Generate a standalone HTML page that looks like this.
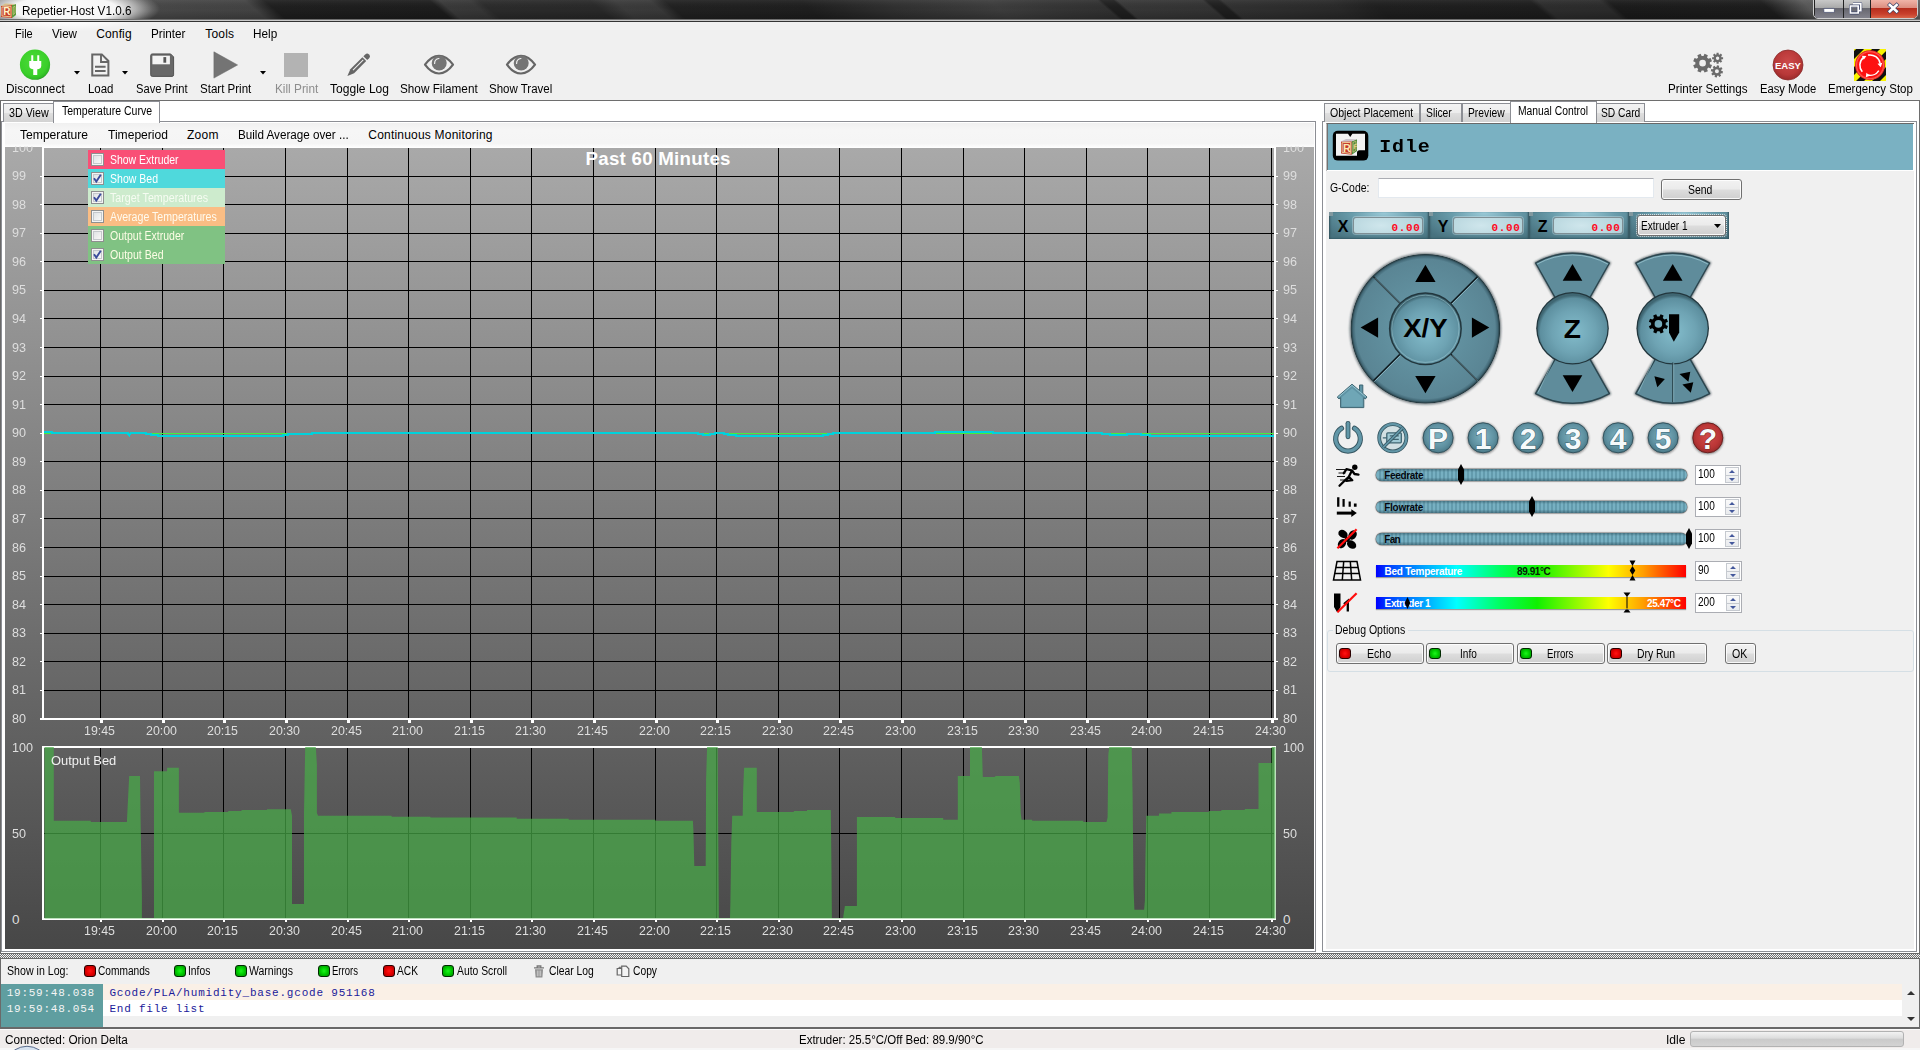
<!DOCTYPE html>
<html><head><meta charset="utf-8"><title>Repetier-Host V1.0.6</title>
<style>
html,body{margin:0;padding:0;}
body{width:1920px;height:1050px;overflow:hidden;background:#f0f0f0;position:relative;font-family:"Liberation Sans",sans-serif;}
div,.t,.a{position:absolute;}
.t{white-space:pre;display:block;}
svg{overflow:visible;}
</style></head><body>
<div style="left:0px;top:100px;width:1920px;height:1px;background:#6e6e6e;"></div>
<div style="left:0px;top:101px;width:1316px;height:852px;background:#fff;"></div>
<div style="left:0px;top:101px;width:1px;height:852px;background:#696969;"></div>
<div style="left:1px;top:121px;width:1315px;height:831px;border:1px solid #8c8e94;box-sizing:border-box;background:#fff;"></div>
<div style="left:3px;top:103px;width:51px;height:19px;border:1px solid #8c8e94;border-bottom:none;box-sizing:border-box;background:linear-gradient(to bottom,#f3f3f3 0,#ececec 48%,#dedede 52%,#d2d2d2 100%);"></div>
<div style="left:53px;top:101px;width:107px;height:22px;border:1px solid #8c8e94;border-bottom:none;box-sizing:border-box;background:#fff;"></div>
<span class="t" style="left:8.80px;top:106.75px;font-size:12.5px;line-height:12.5px;color:#000;transform:scaleX(0.8571);transform-origin:0 0;">3D View</span>
<span class="t" style="left:61.50px;top:104.75px;font-size:12.5px;line-height:12.5px;color:#000;transform:scaleX(0.8412);transform-origin:0 0;">Temperature Curve</span>
<div style="left:5px;top:123px;width:1309px;height:24px;background:linear-gradient(to bottom,#f0f0f0 0,#f6f6f6 30%,#f5f5f5 85%,#fdfdfd 100%);"></div>
<span class="t" style="left:20.00px;top:129.00px;font-size:12px;line-height:12px;color:#000;transform:scaleX(1.0094);transform-origin:0 0;">Temperature</span>
<span class="t" style="left:107.50px;top:129.00px;font-size:12px;line-height:12px;color:#000;transform:scaleX(1.0070);transform-origin:0 0;">Timeperiod</span>
<span class="t" style="left:186.90px;top:129.00px;font-size:12px;line-height:12px;color:#000;letter-spacing:0.281px;">Zoom</span>
<span class="t" style="left:238.30px;top:129.00px;font-size:12px;line-height:12px;color:#000;transform:scaleX(0.9723);transform-origin:0 0;">Build Average over ...</span>
<span class="t" style="left:368.30px;top:129.00px;font-size:12px;line-height:12px;color:#000;letter-spacing:0.206px;">Continuous Monitoring</span>
<div style="left:5px;top:147px;width:1309px;height:802px;background:linear-gradient(to bottom,#a9a9a9 0,#474747 100%);overflow:hidden;"><!--c--></div>
<svg class="a" style="left:0;top:147px" width="1316" height="802" viewBox="0 147 1316 802" shape-rendering="crispEdges">
<path d="M100.5 147V718 M162.5 147V718 M223.5 147V718 M285.5 147V718 M347.5 147V718 M408.5 147V718 M470.5 147V718 M531.5 147V718 M593.5 147V718 M655.5 147V718 M716.5 147V718 M778.5 147V718 M839.5 147V718 M901.5 147V718 M963.5 147V718 M1024.5 147V718 M1086.5 147V718 M1147.5 147V718 M1209.5 147V718 M1271.5 147V718 M44 176.5H1274 M44 204.5H1274 M44 233.5H1274 M44 261.5H1274 M44 290.5H1274 M44 318.5H1274 M44 347.5H1274 M44 376.5H1274 M44 404.5H1274 M44 433.5H1274 M44 461.5H1274 M44 490.5H1274 M44 518.5H1274 M44 547.5H1274 M44 576.5H1274 M44 604.5H1274 M44 633.5H1274 M44 661.5H1274 M44 690.5H1274" stroke="#000" stroke-width="1" fill="none"/>
<path d="M43 147V720 M1275 147V720" stroke="#fff" stroke-width="2" fill="none"/>
<path d="M40 719H1278" stroke="#fff" stroke-width="2" fill="none"/>
<path d="M42 147.500H1276" stroke="#fff" stroke-width="1" fill="none"/>
<path d="M40 176.5H42 M1276 176.5H1278 M40 204.5H42 M1276 204.5H1278 M40 233.5H42 M1276 233.5H1278 M40 261.5H42 M1276 261.5H1278 M40 290.5H42 M1276 290.5H1278 M40 318.5H42 M1276 318.5H1278 M40 347.5H42 M1276 347.5H1278 M40 376.5H42 M1276 376.5H1278 M40 404.5H42 M1276 404.5H1278 M40 433.5H42 M1276 433.5H1278 M40 461.5H42 M1276 461.5H1278 M40 490.5H42 M1276 490.5H1278 M40 518.5H42 M1276 518.5H1278 M40 547.5H42 M1276 547.5H1278 M40 576.5H42 M1276 576.5H1278 M40 604.5H42 M1276 604.5H1278 M40 633.5H42 M1276 633.5H1278 M40 661.5H42 M1276 661.5H1278 M40 690.5H42 M1276 690.5H1278 M100 720h2v2h-2z M162 720h2v2h-2z M223 720h2v2h-2z M285 720h2v2h-2z M347 720h2v2h-2z M408 720h2v2h-2z M470 720h2v2h-2z M531 720h2v2h-2z M593 720h2v2h-2z M655 720h2v2h-2z M716 720h2v2h-2z M778 720h2v2h-2z M839 720h2v2h-2z M901 720h2v2h-2z M963 720h2v2h-2z M1024 720h2v2h-2z M1086 720h2v2h-2z M1147 720h2v2h-2z M1209 720h2v2h-2z M1271 720h2v2h-2z" stroke="#fff" stroke-width="1" fill="#fff"/>
<path d="M100.5 748V918 M162.5 748V918 M223.5 748V918 M285.5 748V918 M347.5 748V918 M408.5 748V918 M470.5 748V918 M531.5 748V918 M593.5 748V918 M655.5 748V918 M716.5 748V918 M778.5 748V918 M839.5 748V918 M901.5 748V918 M963.5 748V918 M1024.5 748V918 M1086.5 748V918 M1147.5 748V918 M1209.5 748V918 M1271.5 748V918 M44 833.500H1274" stroke="#000" stroke-width="1" fill="none"/>
<path d="M43 746V920 M1275 746V920" stroke="#fff" stroke-width="2" fill="none"/>
<path d="M42 747H1276 M42 919H1276" stroke="#fff" stroke-width="2" fill="none"/>
</svg>
<svg class="a" style="left:0;top:740px" width="1316" height="190" viewBox="0 740 1316 190">
<path d="M44.5 747 L53.8 747 L53.8 820.7 L90.8 820.7 L90.8 822 L126.9 822 L128.2 795.5 L129.2 776.1 L140 776.1 L140.7 825.5 L141.9 896.8 L141.9 918 L154 918 L154 771.2 L167.1 771.2 L167.1 767.8 L178.9 767.8 L178.9 812.8 L204.4 812.8 L204.4 811.9 L228.2 811.9 L228.2 811 L241.5 811 L241.5 810.1 L267 810.1 L267 809.3 L290.8 809.3 L292 815.8 L292 903.9 L304 903.9 L304 813.1 L305.2 747 L315.8 747 L316.9 764.7 L316.9 813.1 L318.1 815.8 L391.6 815.8 L391.6 816.7 L430.4 816.7 L430.4 817.5 L516.7 817.5 L516.7 818.8 L568.7 818.8 L568.7 819.8 L655.5 819.8 L655.5 820.7 L692.9 820.7 L693.4 829.9 L694.3 866 L705.7 866 L706.1 778.8 L707.1 747 L717.7 747 L718.1 814.9 L718.9 918 L730 918 L730.4 901.2 L731.3 842.2 L732.2 815.8 L742.7 815.8 L743.1 792 L744.1 767.8 L756.8 767.8 L756.8 811.9 L793.8 811.9 L793.8 811 L807 811 L807 810.1 L830.8 810.1 L831.4 861.6 L831.9 918 L843.2 918 L843.2 917 L844.9 906 L856.9 906 L856.9 817 L895.2 817 L895.2 817.9 L943.2 817.9 L943.2 819.8 L957.8 819.8 L957.8 776.1 L970 776.1 L970 747 L981.9 747 L982.8 777 L995.2 777 L995.2 776.1 L1018.9 776.1 L1019.8 783.2 L1020.7 813.1 L1021.6 819.8 L1032.2 819.8 L1032.2 820.7 L1083.3 820.7 L1083.3 822 L1106.5 822 L1107.6 817.5 L1108.3 755 L1109.2 747 L1131.7 747 L1132.6 794.6 L1133.5 886.3 L1134.4 909.7 L1144.1 909.7 L1144.9 900.4 L1145.5 854.5 L1146.3 815.8 L1159 815.8 L1159 813.4 L1171.4 813.4 L1171.4 811.9 L1209 811.9 L1209 810.9 L1221.3 810.9 L1221.3 809.9 L1244.8 809.9 L1244.8 808.9 L1258.5 808.9 L1258.5 763.1 L1271.6 763.1 L1271.6 747 L1275.5 747 L1275.5 918.5 L44.5 918.5Z" fill="#48aa48" fill-opacity=".72"/>
</svg>
<svg class="a" style="left:0;top:147px" width="1316" height="802" viewBox="0 147 1316 802" shape-rendering="crispEdges">
<path d="M100 920h2v2h-2z M162 920h2v2h-2z M223 920h2v2h-2z M285 920h2v2h-2z M347 920h2v2h-2z M408 920h2v2h-2z M470 920h2v2h-2z M531 920h2v2h-2z M593 920h2v2h-2z M655 920h2v2h-2z M716 920h2v2h-2z M778 920h2v2h-2z M839 920h2v2h-2z M901 920h2v2h-2z M963 920h2v2h-2z M1024 920h2v2h-2z M1086 920h2v2h-2z M1147 920h2v2h-2z M1209 920h2v2h-2z M1271 920h2v2h-2z" fill="#fff"/>
<path d="M44 433.500H1274" stroke="#46ee3c" stroke-width="1" fill="none"/>
<path d="M44 432V432H52V433H127.7L129.1 435.500L130.5 433V433H145.7V434H151V435H158V436H282.5V435H288V434H311.5V433H698.2V434H703V435H710V434H715V433H723.5V434H728V435H735.5V436H823V435H828V434H833V433H935V432H993V433H1101.9V434H1110V435H1126.5V434H1141V435H1150V436H1274" stroke="#00d2dc" stroke-width="2" fill="none"/>
</svg>
<span class="t" style="left:12.00px;top:140.75px;font-size:13.5px;line-height:13.5px;color:#dedede;transform:scaleX(0.9323);transform-origin:0 0;clip-path:inset(5.400px 0 0 0);">100</span>
<span class="t" style="left:1283.00px;top:140.75px;font-size:13.5px;line-height:13.5px;color:#dedede;transform:scaleX(0.9323);transform-origin:0 0;clip-path:inset(5.400px 0 0 0);">100</span>
<span class="t" style="left:12.00px;top:168.75px;font-size:13.5px;line-height:13.5px;color:#dedede;transform:scaleX(0.9323);transform-origin:0 0;">99</span>
<span class="t" style="left:1283.00px;top:168.75px;font-size:13.5px;line-height:13.5px;color:#dedede;transform:scaleX(0.9323);transform-origin:0 0;">99</span>
<span class="t" style="left:12.00px;top:197.75px;font-size:13.5px;line-height:13.5px;color:#dedede;transform:scaleX(0.9323);transform-origin:0 0;">98</span>
<span class="t" style="left:1283.00px;top:197.75px;font-size:13.5px;line-height:13.5px;color:#dedede;transform:scaleX(0.9323);transform-origin:0 0;">98</span>
<span class="t" style="left:12.00px;top:225.75px;font-size:13.5px;line-height:13.5px;color:#dedede;transform:scaleX(0.9323);transform-origin:0 0;">97</span>
<span class="t" style="left:1283.00px;top:225.75px;font-size:13.5px;line-height:13.5px;color:#dedede;transform:scaleX(0.9323);transform-origin:0 0;">97</span>
<span class="t" style="left:12.00px;top:254.75px;font-size:13.5px;line-height:13.5px;color:#dedede;transform:scaleX(0.9323);transform-origin:0 0;">96</span>
<span class="t" style="left:1283.00px;top:254.75px;font-size:13.5px;line-height:13.5px;color:#dedede;transform:scaleX(0.9323);transform-origin:0 0;">96</span>
<span class="t" style="left:12.00px;top:282.75px;font-size:13.5px;line-height:13.5px;color:#dedede;transform:scaleX(0.9323);transform-origin:0 0;">95</span>
<span class="t" style="left:1283.00px;top:282.75px;font-size:13.5px;line-height:13.5px;color:#dedede;transform:scaleX(0.9323);transform-origin:0 0;">95</span>
<span class="t" style="left:12.00px;top:311.75px;font-size:13.5px;line-height:13.5px;color:#dedede;transform:scaleX(0.9323);transform-origin:0 0;">94</span>
<span class="t" style="left:1283.00px;top:311.75px;font-size:13.5px;line-height:13.5px;color:#dedede;transform:scaleX(0.9323);transform-origin:0 0;">94</span>
<span class="t" style="left:12.00px;top:340.75px;font-size:13.5px;line-height:13.5px;color:#dedede;transform:scaleX(0.9323);transform-origin:0 0;">93</span>
<span class="t" style="left:1283.00px;top:340.75px;font-size:13.5px;line-height:13.5px;color:#dedede;transform:scaleX(0.9323);transform-origin:0 0;">93</span>
<span class="t" style="left:12.00px;top:368.75px;font-size:13.5px;line-height:13.5px;color:#dedede;transform:scaleX(0.9323);transform-origin:0 0;">92</span>
<span class="t" style="left:1283.00px;top:368.75px;font-size:13.5px;line-height:13.5px;color:#dedede;transform:scaleX(0.9323);transform-origin:0 0;">92</span>
<span class="t" style="left:12.00px;top:397.75px;font-size:13.5px;line-height:13.5px;color:#dedede;transform:scaleX(0.9323);transform-origin:0 0;">91</span>
<span class="t" style="left:1283.00px;top:397.75px;font-size:13.5px;line-height:13.5px;color:#dedede;transform:scaleX(0.9323);transform-origin:0 0;">91</span>
<span class="t" style="left:12.00px;top:425.75px;font-size:13.5px;line-height:13.5px;color:#dedede;transform:scaleX(0.9323);transform-origin:0 0;">90</span>
<span class="t" style="left:1283.00px;top:425.75px;font-size:13.5px;line-height:13.5px;color:#dedede;transform:scaleX(0.9323);transform-origin:0 0;">90</span>
<span class="t" style="left:12.00px;top:454.75px;font-size:13.5px;line-height:13.5px;color:#dedede;transform:scaleX(0.9323);transform-origin:0 0;">89</span>
<span class="t" style="left:1283.00px;top:454.75px;font-size:13.5px;line-height:13.5px;color:#dedede;transform:scaleX(0.9323);transform-origin:0 0;">89</span>
<span class="t" style="left:12.00px;top:482.75px;font-size:13.5px;line-height:13.5px;color:#dedede;transform:scaleX(0.9323);transform-origin:0 0;">88</span>
<span class="t" style="left:1283.00px;top:482.75px;font-size:13.5px;line-height:13.5px;color:#dedede;transform:scaleX(0.9323);transform-origin:0 0;">88</span>
<span class="t" style="left:12.00px;top:511.75px;font-size:13.5px;line-height:13.5px;color:#dedede;transform:scaleX(0.9323);transform-origin:0 0;">87</span>
<span class="t" style="left:1283.00px;top:511.75px;font-size:13.5px;line-height:13.5px;color:#dedede;transform:scaleX(0.9323);transform-origin:0 0;">87</span>
<span class="t" style="left:12.00px;top:540.75px;font-size:13.5px;line-height:13.5px;color:#dedede;transform:scaleX(0.9323);transform-origin:0 0;">86</span>
<span class="t" style="left:1283.00px;top:540.75px;font-size:13.5px;line-height:13.5px;color:#dedede;transform:scaleX(0.9323);transform-origin:0 0;">86</span>
<span class="t" style="left:12.00px;top:568.75px;font-size:13.5px;line-height:13.5px;color:#dedede;transform:scaleX(0.9323);transform-origin:0 0;">85</span>
<span class="t" style="left:1283.00px;top:568.75px;font-size:13.5px;line-height:13.5px;color:#dedede;transform:scaleX(0.9323);transform-origin:0 0;">85</span>
<span class="t" style="left:12.00px;top:597.75px;font-size:13.5px;line-height:13.5px;color:#dedede;transform:scaleX(0.9323);transform-origin:0 0;">84</span>
<span class="t" style="left:1283.00px;top:597.75px;font-size:13.5px;line-height:13.5px;color:#dedede;transform:scaleX(0.9323);transform-origin:0 0;">84</span>
<span class="t" style="left:12.00px;top:625.75px;font-size:13.5px;line-height:13.5px;color:#dedede;transform:scaleX(0.9323);transform-origin:0 0;">83</span>
<span class="t" style="left:1283.00px;top:625.75px;font-size:13.5px;line-height:13.5px;color:#dedede;transform:scaleX(0.9323);transform-origin:0 0;">83</span>
<span class="t" style="left:12.00px;top:654.75px;font-size:13.5px;line-height:13.5px;color:#dedede;transform:scaleX(0.9323);transform-origin:0 0;">82</span>
<span class="t" style="left:1283.00px;top:654.75px;font-size:13.5px;line-height:13.5px;color:#dedede;transform:scaleX(0.9323);transform-origin:0 0;">82</span>
<span class="t" style="left:12.00px;top:682.75px;font-size:13.5px;line-height:13.5px;color:#dedede;transform:scaleX(0.9323);transform-origin:0 0;">81</span>
<span class="t" style="left:1283.00px;top:682.75px;font-size:13.5px;line-height:13.5px;color:#dedede;transform:scaleX(0.9323);transform-origin:0 0;">81</span>
<span class="t" style="left:12.00px;top:711.75px;font-size:13.5px;line-height:13.5px;color:#dedede;transform:scaleX(0.9323);transform-origin:0 0;">80</span>
<span class="t" style="left:1283.00px;top:711.75px;font-size:13.5px;line-height:13.5px;color:#dedede;transform:scaleX(0.9323);transform-origin:0 0;">80</span>
<span class="t" style="left:84.10px;top:723.75px;font-size:13.5px;line-height:13.5px;color:#dedede;transform:scaleX(0.9176);transform-origin:0 0;">19:45</span>
<span class="t" style="left:84.10px;top:923.75px;font-size:13.5px;line-height:13.5px;color:#dedede;transform:scaleX(0.9176);transform-origin:0 0;">19:45</span>
<span class="t" style="left:146.10px;top:723.75px;font-size:13.5px;line-height:13.5px;color:#dedede;transform:scaleX(0.9176);transform-origin:0 0;">20:00</span>
<span class="t" style="left:146.10px;top:923.75px;font-size:13.5px;line-height:13.5px;color:#dedede;transform:scaleX(0.9176);transform-origin:0 0;">20:00</span>
<span class="t" style="left:207.10px;top:723.75px;font-size:13.5px;line-height:13.5px;color:#dedede;transform:scaleX(0.9176);transform-origin:0 0;">20:15</span>
<span class="t" style="left:207.10px;top:923.75px;font-size:13.5px;line-height:13.5px;color:#dedede;transform:scaleX(0.9176);transform-origin:0 0;">20:15</span>
<span class="t" style="left:269.10px;top:723.75px;font-size:13.5px;line-height:13.5px;color:#dedede;transform:scaleX(0.9176);transform-origin:0 0;">20:30</span>
<span class="t" style="left:269.10px;top:923.75px;font-size:13.5px;line-height:13.5px;color:#dedede;transform:scaleX(0.9176);transform-origin:0 0;">20:30</span>
<span class="t" style="left:331.10px;top:723.75px;font-size:13.5px;line-height:13.5px;color:#dedede;transform:scaleX(0.9176);transform-origin:0 0;">20:45</span>
<span class="t" style="left:331.10px;top:923.75px;font-size:13.5px;line-height:13.5px;color:#dedede;transform:scaleX(0.9176);transform-origin:0 0;">20:45</span>
<span class="t" style="left:392.10px;top:723.75px;font-size:13.5px;line-height:13.5px;color:#dedede;transform:scaleX(0.9176);transform-origin:0 0;">21:00</span>
<span class="t" style="left:392.10px;top:923.75px;font-size:13.5px;line-height:13.5px;color:#dedede;transform:scaleX(0.9176);transform-origin:0 0;">21:00</span>
<span class="t" style="left:454.10px;top:723.75px;font-size:13.5px;line-height:13.5px;color:#dedede;transform:scaleX(0.9176);transform-origin:0 0;">21:15</span>
<span class="t" style="left:454.10px;top:923.75px;font-size:13.5px;line-height:13.5px;color:#dedede;transform:scaleX(0.9176);transform-origin:0 0;">21:15</span>
<span class="t" style="left:515.10px;top:723.75px;font-size:13.5px;line-height:13.5px;color:#dedede;transform:scaleX(0.9176);transform-origin:0 0;">21:30</span>
<span class="t" style="left:515.10px;top:923.75px;font-size:13.5px;line-height:13.5px;color:#dedede;transform:scaleX(0.9176);transform-origin:0 0;">21:30</span>
<span class="t" style="left:577.10px;top:723.75px;font-size:13.5px;line-height:13.5px;color:#dedede;transform:scaleX(0.9176);transform-origin:0 0;">21:45</span>
<span class="t" style="left:577.10px;top:923.75px;font-size:13.5px;line-height:13.5px;color:#dedede;transform:scaleX(0.9176);transform-origin:0 0;">21:45</span>
<span class="t" style="left:639.10px;top:723.75px;font-size:13.5px;line-height:13.5px;color:#dedede;transform:scaleX(0.9176);transform-origin:0 0;">22:00</span>
<span class="t" style="left:639.10px;top:923.75px;font-size:13.5px;line-height:13.5px;color:#dedede;transform:scaleX(0.9176);transform-origin:0 0;">22:00</span>
<span class="t" style="left:700.10px;top:723.75px;font-size:13.5px;line-height:13.5px;color:#dedede;transform:scaleX(0.9176);transform-origin:0 0;">22:15</span>
<span class="t" style="left:700.10px;top:923.75px;font-size:13.5px;line-height:13.5px;color:#dedede;transform:scaleX(0.9176);transform-origin:0 0;">22:15</span>
<span class="t" style="left:762.10px;top:723.75px;font-size:13.5px;line-height:13.5px;color:#dedede;transform:scaleX(0.9176);transform-origin:0 0;">22:30</span>
<span class="t" style="left:762.10px;top:923.75px;font-size:13.5px;line-height:13.5px;color:#dedede;transform:scaleX(0.9176);transform-origin:0 0;">22:30</span>
<span class="t" style="left:823.10px;top:723.75px;font-size:13.5px;line-height:13.5px;color:#dedede;transform:scaleX(0.9176);transform-origin:0 0;">22:45</span>
<span class="t" style="left:823.10px;top:923.75px;font-size:13.5px;line-height:13.5px;color:#dedede;transform:scaleX(0.9176);transform-origin:0 0;">22:45</span>
<span class="t" style="left:885.10px;top:723.75px;font-size:13.5px;line-height:13.5px;color:#dedede;transform:scaleX(0.9176);transform-origin:0 0;">23:00</span>
<span class="t" style="left:885.10px;top:923.75px;font-size:13.5px;line-height:13.5px;color:#dedede;transform:scaleX(0.9176);transform-origin:0 0;">23:00</span>
<span class="t" style="left:947.10px;top:723.75px;font-size:13.5px;line-height:13.5px;color:#dedede;transform:scaleX(0.9176);transform-origin:0 0;">23:15</span>
<span class="t" style="left:947.10px;top:923.75px;font-size:13.5px;line-height:13.5px;color:#dedede;transform:scaleX(0.9176);transform-origin:0 0;">23:15</span>
<span class="t" style="left:1008.10px;top:723.75px;font-size:13.5px;line-height:13.5px;color:#dedede;transform:scaleX(0.9176);transform-origin:0 0;">23:30</span>
<span class="t" style="left:1008.10px;top:923.75px;font-size:13.5px;line-height:13.5px;color:#dedede;transform:scaleX(0.9176);transform-origin:0 0;">23:30</span>
<span class="t" style="left:1070.10px;top:723.75px;font-size:13.5px;line-height:13.5px;color:#dedede;transform:scaleX(0.9176);transform-origin:0 0;">23:45</span>
<span class="t" style="left:1070.10px;top:923.75px;font-size:13.5px;line-height:13.5px;color:#dedede;transform:scaleX(0.9176);transform-origin:0 0;">23:45</span>
<span class="t" style="left:1131.10px;top:723.75px;font-size:13.5px;line-height:13.5px;color:#dedede;transform:scaleX(0.9176);transform-origin:0 0;">24:00</span>
<span class="t" style="left:1131.10px;top:923.75px;font-size:13.5px;line-height:13.5px;color:#dedede;transform:scaleX(0.9176);transform-origin:0 0;">24:00</span>
<span class="t" style="left:1193.10px;top:723.75px;font-size:13.5px;line-height:13.5px;color:#dedede;transform:scaleX(0.9176);transform-origin:0 0;">24:15</span>
<span class="t" style="left:1193.10px;top:923.75px;font-size:13.5px;line-height:13.5px;color:#dedede;transform:scaleX(0.9176);transform-origin:0 0;">24:15</span>
<span class="t" style="left:1255.10px;top:723.75px;font-size:13.5px;line-height:13.5px;color:#dedede;transform:scaleX(0.9176);transform-origin:0 0;">24:30</span>
<span class="t" style="left:1255.10px;top:923.75px;font-size:13.5px;line-height:13.5px;color:#dedede;transform:scaleX(0.9176);transform-origin:0 0;">24:30</span>
<span class="t" style="left:12.00px;top:740.75px;font-size:13.5px;line-height:13.5px;color:#dedede;transform:scaleX(0.9323);transform-origin:0 0;">100</span>
<span class="t" style="left:1283.00px;top:740.75px;font-size:13.5px;line-height:13.5px;color:#dedede;transform:scaleX(0.9323);transform-origin:0 0;">100</span>
<span class="t" style="left:12.00px;top:826.75px;font-size:13.5px;line-height:13.5px;color:#dedede;transform:scaleX(0.9323);transform-origin:0 0;">50</span>
<span class="t" style="left:1283.00px;top:826.75px;font-size:13.5px;line-height:13.5px;color:#dedede;transform:scaleX(0.9323);transform-origin:0 0;">50</span>
<span class="t" style="left:12.00px;top:912.75px;font-size:13.5px;line-height:13.5px;color:#dedede;">0</span>
<span class="t" style="left:1283.00px;top:912.75px;font-size:13.5px;line-height:13.5px;color:#dedede;">0</span>
<span class="t" style="left:50.70px;top:753.75px;font-size:13.5px;line-height:13.5px;color:#f0f0f0;transform:scaleX(0.9561);transform-origin:0 0;">Output Bed</span>
<span class="t" style="left:585.50px;top:150.15px;font-size:18.7px;line-height:18.7px;color:#fff;font-weight:bold;letter-spacing:0.264px;">Past 60 Minutes</span>
<div style="left:88px;top:150px;width:137px;height:19px;background:#f94f76;"></div>
<div style="left:91px;top:153px;width:13px;height:13px;box-sizing:border-box;border:1px solid #8e8f8f;background:linear-gradient(135deg,#d9dde0 0,#f4f4f4 70%,#fff 100%);box-shadow:inset 0 0 0 1px #f4f4f4,inset 0 0 0 2px #c4c8cc;"></div>
<span class="t" style="left:110.30px;top:153.75px;font-size:12.5px;line-height:12.5px;color:#fff;transform:scaleX(0.8367);transform-origin:0 0;">Show Extruder</span>
<div style="left:88px;top:169px;width:137px;height:19px;background:#4fd9dc;"></div>
<div style="left:91px;top:172px;width:13px;height:13px;box-sizing:border-box;border:1px solid #8e8f8f;background:linear-gradient(135deg,#d9dde0 0,#f4f4f4 70%,#fff 100%);box-shadow:inset 0 0 0 1px #f4f4f4,inset 0 0 0 2px #c4c8cc;"></div>
<svg class="a" style="left:91px;top:172px" width="13" height="13" viewBox="0 0 13 13"><path d="M3 6.200 L5.300 9.500 L9.800 2.800" fill="none" stroke="#3b4c9c" stroke-width="1.900"/></svg>
<span class="t" style="left:110.30px;top:172.75px;font-size:12.5px;line-height:12.5px;color:#fff;transform:scaleX(0.8423);transform-origin:0 0;">Show Bed</span>
<div style="left:88px;top:188px;width:137px;height:19px;background:#cdebcd;"></div>
<div style="left:91px;top:191px;width:13px;height:13px;box-sizing:border-box;border:1px solid #8e8f8f;background:linear-gradient(135deg,#d9dde0 0,#f4f4f4 70%,#fff 100%);box-shadow:inset 0 0 0 1px #f4f4f4,inset 0 0 0 2px #c4c8cc;"></div>
<svg class="a" style="left:91px;top:191px" width="13" height="13" viewBox="0 0 13 13"><path d="M3 6.200 L5.300 9.500 L9.800 2.800" fill="none" stroke="#3b4c9c" stroke-width="1.900"/></svg>
<span class="t" style="left:110.30px;top:191.75px;font-size:12.5px;line-height:12.5px;color:#f6fcf2;transform:scaleX(0.8565);transform-origin:0 0;">Target Temperatures</span>
<div style="left:88px;top:207px;width:137px;height:19px;background:#fabd84;"></div>
<div style="left:91px;top:210px;width:13px;height:13px;box-sizing:border-box;border:1px solid #8e8f8f;background:linear-gradient(135deg,#d9dde0 0,#f4f4f4 70%,#fff 100%);box-shadow:inset 0 0 0 1px #f4f4f4,inset 0 0 0 2px #c4c8cc;"></div>
<span class="t" style="left:110.30px;top:210.75px;font-size:12.5px;line-height:12.5px;color:#fffaee;transform:scaleX(0.8476);transform-origin:0 0;">Average Temperatures</span>
<div style="left:88px;top:226px;width:137px;height:19px;background:#80c283;"></div>
<div style="left:91px;top:229px;width:13px;height:13px;box-sizing:border-box;border:1px solid #8e8f8f;background:linear-gradient(135deg,#d9dde0 0,#f4f4f4 70%,#fff 100%);box-shadow:inset 0 0 0 1px #f4f4f4,inset 0 0 0 2px #c4c8cc;"></div>
<span class="t" style="left:109.50px;top:229.75px;font-size:12.5px;line-height:12.5px;color:#fdfde6;transform:scaleX(0.8420);transform-origin:0 0;">Output Extruder</span>
<div style="left:88px;top:245px;width:137px;height:19px;background:#80c283;"></div>
<div style="left:91px;top:248px;width:13px;height:13px;box-sizing:border-box;border:1px solid #8e8f8f;background:linear-gradient(135deg,#d9dde0 0,#f4f4f4 70%,#fff 100%);box-shadow:inset 0 0 0 1px #f4f4f4,inset 0 0 0 2px #c4c8cc;"></div>
<svg class="a" style="left:91px;top:248px" width="13" height="13" viewBox="0 0 13 13"><path d="M3 6.200 L5.300 9.500 L9.800 2.800" fill="none" stroke="#3b4c9c" stroke-width="1.900"/></svg>
<span class="t" style="left:109.50px;top:248.75px;font-size:12.5px;line-height:12.5px;color:#fdfde6;transform:scaleX(0.8476);transform-origin:0 0;">Output Bed</span>
<div style="left:1316px;top:101px;width:604px;height:852px;background:#fff;"></div>
<div style="left:1322px;top:121px;width:1595px;height:0px;"></div>
<div style="left:1322px;top:121px;width:595px;height:831px;border:1px solid #8c8e94;box-sizing:border-box;background:#fff;"></div>
<div style="left:1919px;top:101px;width:1px;height:852px;background:#6e6e6e;"></div>
<div style="left:1326px;top:123px;width:588px;height:826px;background:#f0f0f0;"></div>
<div style="left:1326px;top:123px;width:588px;height:48px;background:#fff;border-left:1px solid #bdbdbd;border-top:1px solid #696969;box-sizing:border-box;"></div>
<div style="left:1327px;top:124px;width:1px;height:46px;background:#727272;"></div>
<div style="left:1324px;top:103px;width:96px;height:19px;border:1px solid #8c8e94;border-bottom:none;box-sizing:border-box;background:linear-gradient(to bottom,#f3f3f3 0,#ececec 48%,#dedede 52%,#d2d2d2 100%);"></div>
<span class="t" style="left:1329.70px;top:106.75px;font-size:12.5px;line-height:12.5px;color:#000;transform:scaleX(0.8443);transform-origin:0 0;">Object Placement</span>
<div style="left:1420px;top:103px;width:42px;height:19px;border:1px solid #8c8e94;border-bottom:none;box-sizing:border-box;background:linear-gradient(to bottom,#f3f3f3 0,#ececec 48%,#dedede 52%,#d2d2d2 100%);"></div>
<span class="t" style="left:1426.20px;top:106.75px;font-size:12.5px;line-height:12.5px;color:#000;transform:scaleX(0.8254);transform-origin:0 0;">Slicer</span>
<div style="left:1462px;top:103px;width:49px;height:19px;border:1px solid #8c8e94;border-bottom:none;box-sizing:border-box;background:linear-gradient(to bottom,#f3f3f3 0,#ececec 48%,#dedede 52%,#d2d2d2 100%);"></div>
<span class="t" style="left:1468.40px;top:106.75px;font-size:12.5px;line-height:12.5px;color:#000;transform:scaleX(0.8232);transform-origin:0 0;">Preview</span>
<div style="left:1596px;top:103px;width:49px;height:19px;border:1px solid #8c8e94;border-bottom:none;box-sizing:border-box;background:linear-gradient(to bottom,#f3f3f3 0,#ececec 48%,#dedede 52%,#d2d2d2 100%);"></div>
<span class="t" style="left:1601.20px;top:106.75px;font-size:12.5px;line-height:12.5px;color:#000;transform:scaleX(0.8199);transform-origin:0 0;">SD Card</span>
<div style="left:1510px;top:101px;width:87px;height:22px;border:1px solid #8c8e94;border-bottom:none;box-sizing:border-box;background:#fff;"></div>
<span class="t" style="left:1518.30px;top:104.75px;font-size:12.5px;line-height:12.5px;color:#000;transform:scaleX(0.8258);transform-origin:0 0;">Manual Control</span>
<div style="left:1328px;top:124px;width:585px;height:46px;background:#7ab1c2;"></div>
<svg class="a" style="left:1332px;top:130px" width="38" height="32" viewBox="0 0 38 32"><rect x=".8" y=".8" width="35.500" height="29.800" rx="5" fill="#000"/><path d="M4 3.800 h12 l2.200 3.300 l2.200-3.300 h12.600 v16.500 h-5.500 q-2.500 0-2.500 2.500 v3 h-21z" fill="#f2f2f2"/><path d="M9 11.600 L19.800 11.200 L19.800 24.800 L9 23.500z" fill="#c4362a"/><path d="M19.800 11.200 L25 9.200 L25 21 L19.800 24.800z" fill="#4f8a3a"/><path d="M9 11.600 L14 8.900 L25 9.200 L19.800 11.200z" fill="#c9c2c8"/><path d="M10.100 12.700 L18.700 12.400 L18.700 23.400 L10.100 22.400z" fill="none" stroke="#f3dfa2" stroke-width=".9"/><text x="10.900" y="22" font-family="Liberation Sans" font-weight="bold" font-size="10.800" fill="#fbe9b4">R</text><path d="M21 12.400 L23.900 11.200 L23.900 20.200 L21 22.300z" fill="none" stroke="#d9c67f" stroke-width=".7"/><text x="21.200" y="19.500" font-family="Liberation Sans" font-weight="bold" font-size="6.500" fill="#e9d68f" transform="skewY(-22) translate(0 8.600)">F</text></svg>
<span class="t" style="left:1379.30px;top:136.50px;font-size:20px;line-height:20px;color:#000;font-family:'Liberation Mono',monospace;font-weight:bold;letter-spacing:0.798px;transform:scaleY(.88);transform-origin:0 78%;">Idle</span>
<span class="t" style="left:1330.30px;top:181.75px;font-size:12.5px;line-height:12.5px;color:#000;transform:scaleX(0.8340);transform-origin:0 0;">G-Code:</span>
<div style="left:1378px;top:178px;width:276px;height:20px;box-sizing:border-box;border:1px solid #e3e9ef;border-top-color:#abadb3;background:#fff;border-radius:1px;"></div>
<div style="left:1661px;top:179px;width:81px;height:21px;box-sizing:border-box;border:1px solid #707070;border-radius:3px;background:linear-gradient(to bottom,#f2f2f2 0,#ebebeb 48%,#dddddd 52%,#cfcfcf 100%);box-shadow:inset 0 0 0 1px rgba(255,255,255,.85);"></div>
<span class="t" style="left:1688.00px;top:183.75px;font-size:12.5px;line-height:12.5px;color:#000;transform:scaleX(0.8324);transform-origin:0 0;">Send</span>
<div style="left:1329px;top:212px;width:100px;height:27px;background:radial-gradient(ellipse 70% 120% at 55% 0%,#9ccbd8 0,#6a9dac 45%,#47727f 100%);box-shadow:inset 2px 0 2px -1px #33525c,inset -2px 0 2px -1px #33525c,inset 0 -2px 2px -1px #3a5f6b;"></div>
<div style="left:1353px;top:217px;width:70px;height:17px;box-sizing:border-box;border:1px solid #7f8f95;border-radius:3px;background:radial-gradient(ellipse 60% 100% at 40% 50%,#cfe6ec 0,#b3d3db 100%);box-shadow:0 0 0 1px rgba(220,235,240,.35);"></div>
<span class="t" style="left:1337.70px;top:218.50px;font-size:16px;line-height:16px;color:#000;font-weight:bold;">X</span>
<div style="left:1329px;top:212px;width:4px;height:4px;background:#81989f;"></div>
<span class="t" style="left:1391.50px;top:222.50px;font-size:11px;line-height:11px;color:#ff0a1e;font-family:'Liberation Mono',monospace;font-weight:bold;letter-spacing:0.649px;">0.00</span>
<div style="left:1429px;top:212px;width:100px;height:27px;background:radial-gradient(ellipse 70% 120% at 55% 0%,#9ccbd8 0,#6a9dac 45%,#47727f 100%);box-shadow:inset 2px 0 2px -1px #33525c,inset -2px 0 2px -1px #33525c,inset 0 -2px 2px -1px #3a5f6b;"></div>
<div style="left:1453px;top:217px;width:70px;height:17px;box-sizing:border-box;border:1px solid #7f8f95;border-radius:3px;background:radial-gradient(ellipse 60% 100% at 40% 50%,#cfe6ec 0,#b3d3db 100%);box-shadow:0 0 0 1px rgba(220,235,240,.35);"></div>
<span class="t" style="left:1437.70px;top:218.50px;font-size:16px;line-height:16px;color:#000;font-weight:bold;">Y</span>
<div style="left:1429px;top:212px;width:4px;height:4px;background:#81989f;"></div>
<span class="t" style="left:1491.50px;top:222.50px;font-size:11px;line-height:11px;color:#ff0a1e;font-family:'Liberation Mono',monospace;font-weight:bold;letter-spacing:0.649px;">0.00</span>
<div style="left:1529px;top:212px;width:100px;height:27px;background:radial-gradient(ellipse 70% 120% at 55% 0%,#9ccbd8 0,#6a9dac 45%,#47727f 100%);box-shadow:inset 2px 0 2px -1px #33525c,inset -2px 0 2px -1px #33525c,inset 0 -2px 2px -1px #3a5f6b;"></div>
<div style="left:1553px;top:217px;width:70px;height:17px;box-sizing:border-box;border:1px solid #7f8f95;border-radius:3px;background:radial-gradient(ellipse 60% 100% at 40% 50%,#cfe6ec 0,#b3d3db 100%);box-shadow:0 0 0 1px rgba(220,235,240,.35);"></div>
<span class="t" style="left:1537.70px;top:218.50px;font-size:16px;line-height:16px;color:#000;font-weight:bold;">Z</span>
<div style="left:1529px;top:212px;width:4px;height:4px;background:#81989f;"></div>
<span class="t" style="left:1591.50px;top:222.50px;font-size:11px;line-height:11px;color:#ff0a1e;font-family:'Liberation Mono',monospace;font-weight:bold;letter-spacing:0.649px;">0.00</span>
<div style="left:1629px;top:212px;width:100px;height:27px;background:radial-gradient(ellipse 70% 120% at 55% 0%,#9ccbd8 0,#6a9dac 45%,#47727f 100%);box-shadow:inset 2px 0 2px -1px #33525c,inset -2px 0 2px -1px #33525c,inset 0 -2px 2px -1px #3a5f6b;"></div>
<div style="left:1629px;top:212px;width:4px;height:4px;background:#81989f;"></div>
<div style="left:1637px;top:215px;width:89px;height:21px;box-sizing:border-box;border:1px solid #707070;border-radius:3px;background:linear-gradient(to bottom,#f2f2f2 0,#ebebeb 48%,#dddddd 52%,#cfcfcf 100%);box-shadow:inset 0 0 0 1px rgba(255,255,255,.85);outline:1px dotted #ddd;outline-offset:0px;"></div>
<span class="t" style="left:1641.30px;top:219.75px;font-size:12.5px;line-height:12.5px;color:#000;transform:scaleX(0.8063);transform-origin:0 0;">Extruder 1</span>
<svg class="a" style="left:1714px;top:224px" width="7" height="4" viewBox="0 0 7 4"><path d="M0 0h7L3.500 4z" fill="#000"/></svg>
<svg class="a" style="left:1326px;top:245px" width="420" height="170" viewBox="1326 245 420 170">
<defs>
<radialGradient id="gring" cx="50%" cy="50%" r="50%"><stop offset="0" stop-color="#6c9dac"/><stop offset=".6" stop-color="#5f8d9c"/><stop offset=".93" stop-color="#5a8594"/><stop offset=".965" stop-color="#426876"/><stop offset=".99" stop-color="#24393f"/><stop offset="1" stop-color="#24393f" stop-opacity="0"/></radialGradient>
<radialGradient id="gknob" cx="52%" cy="55%" r="52%"><stop offset="0" stop-color="#83bccb"/><stop offset=".6" stop-color="#6ea3b3"/><stop offset=".92" stop-color="#5d8f9f"/><stop offset="1" stop-color="#3f6672"/></radialGradient>
<filter id="sh" x="-10%" y="-10%" width="120%" height="120%"><feGaussianBlur stdDeviation="1.200"/></filter>
</defs>
<circle cx="1425.4" cy="328.8" r="75.800" fill="#1d2c32" filter="url(#sh)" opacity=".6"/>
<circle cx="1425.4" cy="328.8" r="75" fill="url(#gring)"/>
<path d="M1450.9 354.3L1477.4 380.8" stroke="#0d171b" stroke-width="1.500"/>
<path d="M1451.8 355.2L1478.3 381.7" stroke="#a9d2dc" stroke-width=".8" opacity=".7"/>
<path d="M1399.9 354.3L1373.4 380.8" stroke="#0d171b" stroke-width="1.500"/>
<path d="M1400.8 355.2L1374.3 381.7" stroke="#a9d2dc" stroke-width=".8" opacity=".7"/>
<path d="M1399.9 303.3L1373.4 276.8" stroke="#0d171b" stroke-width="1.500"/>
<path d="M1400.8 304.2L1374.3 277.7" stroke="#a9d2dc" stroke-width=".8" opacity=".7"/>
<path d="M1450.9 303.3L1477.4 276.8" stroke="#0d171b" stroke-width="1.500"/>
<path d="M1451.8 304.2L1478.3 277.7" stroke="#a9d2dc" stroke-width=".8" opacity=".7"/>
<circle cx="1425.4" cy="328.8" r="36.500" fill="#22363d"/>
<circle cx="1425.4" cy="328.8" r="35" fill="url(#gknob)"/>
<circle cx="1425.4" cy="328.8" r="33.600" fill="none" stroke="#a9d2dc" stroke-width=".8" opacity=".6"/>
<path d="M1425.4 264.800 l10.200 17.200 h-20.400z M1425.4 393.200 l10.200-17.100 h-20.400z M1360.600 327.600 l17.500-10.100 v20.200z M1489.300 327.600 l-17.400-10.100 v20.200z" fill="#000"/>
<text x="1425.4" y="336.600" text-anchor="middle" font-family="Liberation Sans" font-weight="bold" font-size="26" textLength="44.500" lengthAdjust="spacingAndGlyphs" fill="#000">X/Y</text>
<path d="M1337.300 397 L1352 384.200 L1359.500 390.600 V385 H1362.800 V393.400 L1367 397 L1365.300 399 L1363.800 397.700 V407.600 H1340.600 V397.700 L1339 399z" fill="#5f94a5" stroke="#3d6572" stroke-width="1"/><path d="M1341.600 397.200 L1352 388.200 L1362.600 397.200 V406.600 H1341.600z" fill="#6fa6b6"/><path d="M1338.300 397.200 L1352 385.400 L1366 397.200" fill="none" stroke="#9cc9d5" stroke-width=".9"/>
<path d="M1572.5 328.3 L1535.6 263.0 A75 75 0 0 1 1609.4 263.0Z" fill="#1d2c32" filter="url(#sh)" opacity=".7" stroke="#1d2c32" stroke-width="2.500"/>
<path d="M1572.5 328.3 L1535.6 393.6 A75 75 0 0 0 1609.4 393.6Z" fill="#1d2c32" filter="url(#sh)" opacity=".7" stroke="#1d2c32" stroke-width="2.500"/>
<path d="M1572.5 328.3 L1535.6 263.0 A75 75 0 0 1 1609.4 263.0Z" fill="#5f8c9b" stroke="#2c464f" stroke-width="1.400" stroke-linejoin="round"/>
<path d="M1572.5 328.3 L1535.6 393.6 A75 75 0 0 0 1609.4 393.6Z" fill="#5f8c9b" stroke="#2c464f" stroke-width="1.400" stroke-linejoin="round"/>
<path d="M1537.0 264.2 A73.3 73.3 0 0 1 1608.0 264.2" fill="none" stroke="#a9d2dc" stroke-width=".9" opacity=".7"/>
<path d="M1553.3 360.1 L1538.2 392.4" fill="none" stroke="#a9d2dc" stroke-width=".9" opacity=".6"/>
<circle cx="1572.5" cy="328.3" r="36.300" fill="#22363d"/>
<circle cx="1572.5" cy="328.3" r="35" fill="url(#gknob)"/>
<path d="M1572.5 264.100 l9.800 16.600 h-19.600z" fill="#000"/>
<path d="M1672.7 328.3 L1635.8 263.0 A75 75 0 0 1 1709.6 263.0Z" fill="#1d2c32" filter="url(#sh)" opacity=".7" stroke="#1d2c32" stroke-width="2.500"/>
<path d="M1672.7 328.3 L1635.8 393.6 A75 75 0 0 0 1709.6 393.6Z" fill="#1d2c32" filter="url(#sh)" opacity=".7" stroke="#1d2c32" stroke-width="2.500"/>
<path d="M1672.7 328.3 L1635.8 263.0 A75 75 0 0 1 1709.6 263.0Z" fill="#5f8c9b" stroke="#2c464f" stroke-width="1.400" stroke-linejoin="round"/>
<path d="M1672.7 328.3 L1635.8 393.6 A75 75 0 0 0 1709.6 393.6Z" fill="#5f8c9b" stroke="#2c464f" stroke-width="1.400" stroke-linejoin="round"/>
<path d="M1637.2 264.2 A73.3 73.3 0 0 1 1708.2 264.2" fill="none" stroke="#a9d2dc" stroke-width=".9" opacity=".7"/>
<path d="M1653.5 360.1 L1638.4 392.4" fill="none" stroke="#a9d2dc" stroke-width=".9" opacity=".6"/>
<circle cx="1672.7" cy="328.3" r="36.300" fill="#22363d"/>
<circle cx="1672.7" cy="328.3" r="35" fill="url(#gknob)"/>
<path d="M1672.7 264.100 l9.800 16.600 h-19.600z" fill="#000"/>
<path d="M1572.500 392 l9.800-16.700 h-19.600z" fill="#000"/>
<text x="1572.300" y="337.600" text-anchor="middle" font-family="Liberation Sans" font-weight="bold" font-size="26" textLength="17.200" lengthAdjust="spacingAndGlyphs" fill="#000">Z</text>
<path d="M1672.700 362.500 V402.500" stroke="#2c464f" stroke-width="1.200"/><path d="M1673.700 363 V402" stroke="#a9d2dc" stroke-width=".8" opacity=".6"/>
<path d="M1654.400 376.200 L1664.900 379.100 L1657.300 387.200z M1679.500 374 L1690.300 371.800 L1688.400 381.800z M1682.400 384.600 L1693.300 382.300 L1690.800 392.700z" fill="#000"/>
<path d="M1665.72 324.98 L1667.95 326.09 L1666.73 329.06 L1664.36 328.28 L1662.81 329.84 L1663.61 332.20 L1660.64 333.44 L1659.52 331.21 L1657.32 331.22 L1656.21 333.45 L1653.24 332.23 L1654.02 329.86 L1652.46 328.31 L1650.10 329.11 L1648.86 326.14 L1651.09 325.02 L1651.08 322.82 L1648.85 321.71 L1650.07 318.74 L1652.44 319.52 L1653.99 317.96 L1653.19 315.60 L1656.16 314.36 L1657.28 316.59 L1659.48 316.58 L1660.59 314.35 L1663.56 315.57 L1662.78 317.94 L1664.34 319.49 L1666.70 318.69 L1667.94 321.66 L1665.71 322.78Z M1662.20 323.90 A3.8 3.8 0 1 0 1654.60 323.90 A3.8 3.8 0 1 0 1662.20 323.90Z" fill="#000" fill-rule="evenodd"/>
<path d="M1669 314.300 H1679.200 V332.400 L1673.800 341.700 L1669 332.400z" fill="#000"/>
</svg>
<svg class="a" style="left:1326px;top:418px" width="420" height="40" viewBox="1326 418 420 40">
<defs><radialGradient id="gb" cx="50%" cy="45%" r="55%"><stop offset="0" stop-color="#7fb4c3"/><stop offset=".7" stop-color="#5f91a1"/><stop offset="1" stop-color="#4a7987"/></radialGradient>
<radialGradient id="gr" cx="50%" cy="45%" r="55%"><stop offset="0" stop-color="#d04a4a"/><stop offset=".7" stop-color="#bb3636"/><stop offset="1" stop-color="#9c2b2b"/></radialGradient>
<filter id="sh2" x="-20%" y="-20%" width="140%" height="140%"><feGaussianBlur stdDeviation=".9"/></filter></defs>
<path d="M1341.5 428.3 A12.300 12.300 0 1 0 1354.5 428.3" fill="none" stroke="#34545f" stroke-width="5.200" stroke-linecap="round"/><path d="M1348 423.3 V436.8" stroke="#34545f" stroke-width="4.800" stroke-linecap="round"/>
<path d="M1341.5 428.3 A12.300 12.300 0 1 0 1354.5 428.3" fill="none" stroke="#6297a8" stroke-width="3.400" stroke-linecap="round"/><path d="M1348 423.3 V436.8" stroke="#6297a8" stroke-width="3" stroke-linecap="round"/>
<circle cx="1392.8" cy="437.8" r="13.600" fill="#79aebd" fill-opacity=".25" stroke="#34545f" stroke-width="3.800"/><circle cx="1392.8" cy="437.8" r="13.600" fill="none" stroke="#6297a8" stroke-width="2.200"/>
<rect x="1386.8" y="432.8" width="14.500" height="10" rx="1" fill="#9fc9d4" stroke="#3f6572" stroke-width="1.300"/><path d="M1382.8 437.8h4 M1389.8 435.8h9 M1389.8 439.3h9" stroke="#3f6572" stroke-width="1.300"/>
<path d="M1383.2 447.40000000000003 L1402.3999999999999 428.2" stroke="#34545f" stroke-width="3.400"/><path d="M1383.2 447.40000000000003 L1402.3999999999999 428.2" stroke="#6297a8" stroke-width="1.800"/>
<circle cx="1438.1" cy="438.3" r="15.800" fill="#222" filter="url(#sh2)" opacity=".55"/>
<circle cx="1438.1" cy="437.8" r="15" fill="url(#gb)" stroke="#34545f" stroke-width="1"/>
<text x="1438.1" y="448.8" text-anchor="middle" font-family="Liberation Sans" font-weight="bold" font-size="30" fill="#f6fafb" stroke="#3c6370" stroke-width="1.100" paint-order="stroke" stroke-linejoin="round">P</text>
<circle cx="1483.1" cy="438.3" r="15.800" fill="#222" filter="url(#sh2)" opacity=".55"/>
<circle cx="1483.1" cy="437.8" r="15" fill="url(#gb)" stroke="#34545f" stroke-width="1"/>
<text x="1483.1" y="448.8" text-anchor="middle" font-family="Liberation Sans" font-weight="bold" font-size="30" fill="#f6fafb" stroke="#3c6370" stroke-width="1.100" paint-order="stroke" stroke-linejoin="round">1</text>
<circle cx="1528.1" cy="438.3" r="15.800" fill="#222" filter="url(#sh2)" opacity=".55"/>
<circle cx="1528.1" cy="437.8" r="15" fill="url(#gb)" stroke="#34545f" stroke-width="1"/>
<text x="1528.1" y="448.8" text-anchor="middle" font-family="Liberation Sans" font-weight="bold" font-size="30" fill="#f6fafb" stroke="#3c6370" stroke-width="1.100" paint-order="stroke" stroke-linejoin="round">2</text>
<circle cx="1573.1" cy="438.3" r="15.800" fill="#222" filter="url(#sh2)" opacity=".55"/>
<circle cx="1573.1" cy="437.8" r="15" fill="url(#gb)" stroke="#34545f" stroke-width="1"/>
<text x="1573.1" y="448.8" text-anchor="middle" font-family="Liberation Sans" font-weight="bold" font-size="30" fill="#f6fafb" stroke="#3c6370" stroke-width="1.100" paint-order="stroke" stroke-linejoin="round">3</text>
<circle cx="1618.1" cy="438.3" r="15.800" fill="#222" filter="url(#sh2)" opacity=".55"/>
<circle cx="1618.1" cy="437.8" r="15" fill="url(#gb)" stroke="#34545f" stroke-width="1"/>
<text x="1618.1" y="448.8" text-anchor="middle" font-family="Liberation Sans" font-weight="bold" font-size="30" fill="#f6fafb" stroke="#3c6370" stroke-width="1.100" paint-order="stroke" stroke-linejoin="round">4</text>
<circle cx="1663.1" cy="438.3" r="15.800" fill="#222" filter="url(#sh2)" opacity=".55"/>
<circle cx="1663.1" cy="437.8" r="15" fill="url(#gb)" stroke="#34545f" stroke-width="1"/>
<text x="1663.1" y="448.8" text-anchor="middle" font-family="Liberation Sans" font-weight="bold" font-size="30" fill="#f6fafb" stroke="#3c6370" stroke-width="1.100" paint-order="stroke" stroke-linejoin="round">5</text>
<circle cx="1707.8" cy="438.3" r="15.800" fill="#222" filter="url(#sh2)" opacity=".55"/>
<circle cx="1707.8" cy="437.8" r="15" fill="url(#gr)" stroke="#6b2020" stroke-width="1"/>
<text x="1707.8" y="448.8" text-anchor="middle" font-family="Liberation Sans" font-weight="bold" font-size="30" fill="#f6fafb" stroke="#7a2424" stroke-width="1.100" paint-order="stroke" stroke-linejoin="round">?</text>
</svg>
<div style="left:1375.5px;top:469px;width:311px;height:12px;border-radius:6px;background:linear-gradient(to bottom,rgba(30,60,72,.45) 0,rgba(30,60,72,0) 25%,rgba(30,60,72,0) 70%,rgba(30,60,72,.5) 100%),repeating-linear-gradient(to right,#77b0c2 0,#77b0c2 3px,#4f8697 3px,#4f8697 4px) 0.500px 0,#77b0c2;box-shadow:0 0 1px .6px rgba(60,60,60,.8);"></div>
<span class="t" style="left:1384.30px;top:470.50px;font-size:10px;line-height:10px;color:#04080f;font-weight:bold;letter-spacing:-0.361px;">Feedrate</span>
<svg class="a" style="left:1457px;top:464px" width="8" height="21" viewBox="0 0 8 21"><path d="M4 0 L7 5.500 V15.500 L4 21 L1 15.500 V5.500z" fill="#000"/></svg>
<div style="left:1695px;top:465px;width:46px;height:20px;box-sizing:border-box;border:1px solid #abadb3;background:#fff;"></div>
<div style="left:1725px;top:467px;width:14px;height:16px;box-sizing:border-box;border:1px solid #c5c9cf;background:linear-gradient(to bottom,#fafafa,#e9ebee);"></div>
<div style="left:1725px;top:474.5px;width:14px;height:1px;background:#c5c9cf;"></div>
<svg class="a" style="left:1729px;top:470px" width="6" height="11" viewBox="0 0 6 11"><path d="M0 3L3 0L6 3z M0 8L3 11L6 8z" fill="#44589c"/></svg>
<span class="t" style="left:1698.00px;top:467.75px;font-size:12.5px;line-height:12.5px;color:#000;transform:scaleX(0.8055);transform-origin:0 0;">100</span>
<div style="left:1375.5px;top:501px;width:311px;height:12px;border-radius:6px;background:linear-gradient(to bottom,rgba(30,60,72,.45) 0,rgba(30,60,72,0) 25%,rgba(30,60,72,0) 70%,rgba(30,60,72,.5) 100%),repeating-linear-gradient(to right,#77b0c2 0,#77b0c2 3px,#4f8697 3px,#4f8697 4px) 0.500px 0,#77b0c2;box-shadow:0 0 1px .6px rgba(60,60,60,.8);"></div>
<span class="t" style="left:1384.30px;top:502.50px;font-size:10px;line-height:10px;color:#04080f;font-weight:bold;letter-spacing:-0.290px;">Flowrate</span>
<svg class="a" style="left:1528.4px;top:496px" width="8" height="21" viewBox="0 0 8 21"><path d="M4 0 L7 5.500 V15.500 L4 21 L1 15.500 V5.500z" fill="#000"/></svg>
<div style="left:1695px;top:497px;width:46px;height:20px;box-sizing:border-box;border:1px solid #abadb3;background:#fff;"></div>
<div style="left:1725px;top:499px;width:14px;height:16px;box-sizing:border-box;border:1px solid #c5c9cf;background:linear-gradient(to bottom,#fafafa,#e9ebee);"></div>
<div style="left:1725px;top:506.5px;width:14px;height:1px;background:#c5c9cf;"></div>
<svg class="a" style="left:1729px;top:502px" width="6" height="11" viewBox="0 0 6 11"><path d="M0 3L3 0L6 3z M0 8L3 11L6 8z" fill="#44589c"/></svg>
<span class="t" style="left:1698.00px;top:499.75px;font-size:12.5px;line-height:12.5px;color:#000;transform:scaleX(0.8055);transform-origin:0 0;">100</span>
<div style="left:1375.5px;top:533px;width:311px;height:12px;border-radius:6px;background:linear-gradient(to bottom,rgba(30,60,72,.45) 0,rgba(30,60,72,0) 25%,rgba(30,60,72,0) 70%,rgba(30,60,72,.5) 100%),repeating-linear-gradient(to right,#77b0c2 0,#77b0c2 3px,#4f8697 3px,#4f8697 4px) 0.500px 0,#77b0c2;box-shadow:0 0 1px .6px rgba(60,60,60,.8);"></div>
<span class="t" style="left:1384.30px;top:534.50px;font-size:10px;line-height:10px;color:#04080f;font-weight:bold;letter-spacing:-0.726px;">Fan</span>
<svg class="a" style="left:1685.2px;top:528px" width="8" height="21" viewBox="0 0 8 21"><path d="M4 0 L7 5.500 V15.500 L4 21 L1 15.500 V5.500z" fill="#000"/></svg>
<div style="left:1695px;top:529px;width:46px;height:20px;box-sizing:border-box;border:1px solid #abadb3;background:#fff;"></div>
<div style="left:1725px;top:531px;width:14px;height:16px;box-sizing:border-box;border:1px solid #c5c9cf;background:linear-gradient(to bottom,#fafafa,#e9ebee);"></div>
<div style="left:1725px;top:538.5px;width:14px;height:1px;background:#c5c9cf;"></div>
<svg class="a" style="left:1729px;top:534px" width="6" height="11" viewBox="0 0 6 11"><path d="M0 3L3 0L6 3z M0 8L3 11L6 8z" fill="#44589c"/></svg>
<span class="t" style="left:1698.00px;top:531.75px;font-size:12.5px;line-height:12.5px;color:#000;transform:scaleX(0.8055);transform-origin:0 0;">100</span>
<svg class="a" style="left:1334px;top:463px" width="28" height="24" viewBox="0 0 28 24"><circle cx="20.800" cy="4.300" r="2.700" fill="#000"/><path d="M12.500 6.200 L18 7.500 L20.500 11 L24.500 11.600 M18 7.500 L14.800 13.800 L18.300 17.200 L12.500 17.800 M14.800 13.800 L10.300 18 L5.500 22.800 M12.500 6.200 L9.800 10.200" fill="none" stroke="#000" stroke-width="2.300" stroke-linejoin="round" stroke-linecap="round"/><path d="M2 6.500 h9 M4.500 10 h7 M3 13.500 h8 M6 17 h5" stroke="#000" stroke-width=".9"/></svg>
<svg class="a" style="left:1336px;top:497px" width="23" height="21" viewBox="0 0 23 21"><path d="M1.100 .3h2.300v9.400h-2.300z M6.500 2.100h2.200v7.600h-2.200z M12.600 4.400h2.200v5.300h-2.200z M17.900 6.400h2.700v3.300h-2.700z" fill="#000"/><path d="M.8 16.100 H17" stroke="#000" stroke-width="3"/><path d="M15.300 12.300 L20.800 16.100 L15.300 19.900z" fill="#000"/></svg>
<svg class="a" style="left:1335px;top:528px" width="25" height="23" viewBox="0 0 25 23"><g fill="#000"><ellipse cx="8" cy="6" rx="5" ry="3.800" transform="rotate(35 8 6)"/><ellipse cx="17.600" cy="7" rx="5" ry="3.800" transform="rotate(-55 17.600 7)"/><ellipse cx="16.600" cy="16.600" rx="5" ry="3.800" transform="rotate(35 16.600 16.600)"/><ellipse cx="7" cy="15.600" rx="5" ry="3.800" transform="rotate(-55 7 15.600)"/><circle cx="12.300" cy="11.300" r="2.600"/></g><path d="M2.400 20.300 L21.600 1.300" stroke="#ff0c0c" stroke-width="2.200"/></svg>
<svg class="a" style="left:1332px;top:560px" width="30" height="22" viewBox="0 0 30 22"><path d="M5 1.500 H25 L28.500 20 H1.500z M3.900 7.500 H26.100 M2.800 13.500 H27.300 M11.700 1.500 L10.300 20 M18.300 1.500 L19.700 20" fill="none" stroke="#000" stroke-width="1.500"/></svg>
<svg class="a" style="left:1332px;top:592px" width="28" height="24" viewBox="0 0 28 24"><path d="M2 1.500 H8.500 V15 L5.300 20.500 L2 15z" fill="#000"/><path d="M12 12.200 L15.800 9 V19.500" fill="none" stroke="#000" stroke-width="2.300"/><path d="M5.400 20.200 L24.600 1.300" stroke="#ff0c0c" stroke-width="2.200"/></svg>
<div style="left:1376px;top:565px;width:310px;height:12px;background:linear-gradient(to right,#0000ff 0,#0040ff 4%,#00ffff 26%,#00ff60 40%,#10f000 52%,#80f800 63%,#ffff00 75%,#ffa000 86%,#ff0000 100%);box-shadow:0 1px 1px rgba(0,0,0,.35);"></div>
<div style="left:1376px;top:597px;width:310px;height:12px;background:linear-gradient(to right,#0000ff 0,#0040ff 4%,#00ffff 26%,#00ff60 40%,#10f000 52%,#80f800 63%,#ffff00 75%,#ffa000 86%,#ff0000 100%);box-shadow:0 1px 1px rgba(0,0,0,.35);"></div>
<span class="t" style="left:1384.60px;top:566.50px;font-size:10px;line-height:10px;color:#fff;font-weight:bold;letter-spacing:-0.274px;">Bed Temperature</span>
<span class="t" style="left:1517.00px;top:566.50px;font-size:10px;line-height:10px;color:#062006;font-weight:bold;letter-spacing:-0.421px;">89.91°C</span>
<span class="t" style="left:1384.60px;top:598.50px;font-size:10px;line-height:10px;color:#fff;font-weight:bold;letter-spacing:-0.376px;">Extruder 1</span>
<span class="t" style="left:1647.00px;top:598.50px;font-size:10px;line-height:10px;color:#fff;font-weight:bold;letter-spacing:-0.392px;">25.47°C</span>
<svg class="a" style="left:1628px;top:560px" width="9" height="21" viewBox="0 0 9 21"><path d="M1.500 .5 H7.500 L4.500 6 L7.300 10.500 L4.500 15 L7.500 20.500 H1.500 L4.500 15 L1.700 10.500 L4.500 6z" fill="#000"/></svg>
<svg class="a" style="left:1622px;top:592px" width="10" height="21" viewBox="0 0 10 21"><path d="M1.500 .5 H8.500 L5 5z M1.500 20.500 H8.500 L5 16z M4.500 3 H5.500 V18 H4.500z" fill="#000"/></svg>
<svg class="a" style="left:1403.500px;top:597px" width="7" height="12" viewBox="0 0 7 12"><path d="M3.500 0 L6.300 6 L3.500 12 L.7 6z" fill="#000"/></svg>
<div style="left:1695px;top:561px;width:47px;height:20px;box-sizing:border-box;border:1px solid #abadb3;background:#fff;"></div>
<div style="left:1726px;top:563px;width:14px;height:16px;box-sizing:border-box;border:1px solid #c5c9cf;background:linear-gradient(to bottom,#fafafa,#e9ebee);"></div>
<div style="left:1726px;top:570.5px;width:14px;height:1px;background:#c5c9cf;"></div>
<svg class="a" style="left:1730px;top:566px" width="6" height="11" viewBox="0 0 6 11"><path d="M0 3L3 0L6 3z M0 8L3 11L6 8z" fill="#44589c"/></svg>
<span class="t" style="left:1698.00px;top:563.75px;font-size:12.5px;line-height:12.5px;color:#000;transform:scaleX(0.8055);transform-origin:0 0;">90</span>
<div style="left:1695px;top:593px;width:47px;height:20px;box-sizing:border-box;border:1px solid #abadb3;background:#fff;"></div>
<div style="left:1726px;top:595px;width:14px;height:16px;box-sizing:border-box;border:1px solid #c5c9cf;background:linear-gradient(to bottom,#fafafa,#e9ebee);"></div>
<div style="left:1726px;top:602.5px;width:14px;height:1px;background:#c5c9cf;"></div>
<svg class="a" style="left:1730px;top:598px" width="6" height="11" viewBox="0 0 6 11"><path d="M0 3L3 0L6 3z M0 8L3 11L6 8z" fill="#44589c"/></svg>
<span class="t" style="left:1698.00px;top:595.75px;font-size:12.5px;line-height:12.5px;color:#000;transform:scaleX(0.8055);transform-origin:0 0;">200</span>
<div style="left:1327px;top:630px;width:587px;height:42px;box-sizing:border-box;border:1px solid #d5dfe5;border-radius:3px;"></div>
<div style="left:1333px;top:625px;width:75px;height:12px;background:#f0f0f0;"></div>
<span class="t" style="left:1335.30px;top:623.75px;font-size:12.5px;line-height:12.5px;color:#000;transform:scaleX(0.8419);transform-origin:0 0;">Debug Options</span>
<div style="left:1336px;top:643px;width:88px;height:21px;box-sizing:border-box;border:1px solid #707070;border-radius:3px;background:linear-gradient(to bottom,#f2f2f2 0,#ebebeb 48%,#dddddd 52%,#cfcfcf 100%);box-shadow:inset 0 0 0 1px rgba(255,255,255,.85);"></div>
<div style="left:1339px;top:647.5px;width:12px;height:11.5px;box-sizing:border-box;border:1px solid #2a0000;border-radius:3px;background:radial-gradient(circle at 50% 50%,#ff1414 0,#e80000 45%,#a80000 100%);"></div>
<span class="t" style="left:1367.00px;top:647.75px;font-size:12.5px;line-height:12.5px;color:#000;transform:scaleX(0.8423);transform-origin:0 0;">Echo</span>
<div style="left:1426px;top:643px;width:88px;height:21px;box-sizing:border-box;border:1px solid #707070;border-radius:3px;background:linear-gradient(to bottom,#f2f2f2 0,#ebebeb 48%,#dddddd 52%,#cfcfcf 100%);box-shadow:inset 0 0 0 1px rgba(255,255,255,.85);"></div>
<div style="left:1429px;top:647.5px;width:12px;height:11.5px;box-sizing:border-box;border:1px solid #002a00;border-radius:3px;background:radial-gradient(circle at 50% 50%,#1cf41c 0,#00d000 45%,#008a00 100%);"></div>
<span class="t" style="left:1460.20px;top:647.75px;font-size:12.5px;line-height:12.5px;color:#000;transform:scaleX(0.8058);transform-origin:0 0;">Info</span>
<div style="left:1517px;top:643px;width:88px;height:21px;box-sizing:border-box;border:1px solid #707070;border-radius:3px;background:linear-gradient(to bottom,#f2f2f2 0,#ebebeb 48%,#dddddd 52%,#cfcfcf 100%);box-shadow:inset 0 0 0 1px rgba(255,255,255,.85);"></div>
<div style="left:1520px;top:647.5px;width:12px;height:11.5px;box-sizing:border-box;border:1px solid #002a00;border-radius:3px;background:radial-gradient(circle at 50% 50%,#1cf41c 0,#00d000 45%,#008a00 100%);"></div>
<span class="t" style="left:1547.00px;top:647.75px;font-size:12.5px;line-height:12.5px;color:#000;transform:scaleX(0.7729);transform-origin:0 0;">Errors</span>
<div style="left:1607px;top:643px;width:100px;height:21px;box-sizing:border-box;border:1px solid #707070;border-radius:3px;background:linear-gradient(to bottom,#f2f2f2 0,#ebebeb 48%,#dddddd 52%,#cfcfcf 100%);box-shadow:inset 0 0 0 1px rgba(255,255,255,.85);"></div>
<div style="left:1610px;top:647.5px;width:12px;height:11.5px;box-sizing:border-box;border:1px solid #2a0000;border-radius:3px;background:radial-gradient(circle at 50% 50%,#ff1414 0,#e80000 45%,#a80000 100%);"></div>
<span class="t" style="left:1637.40px;top:647.75px;font-size:12.5px;line-height:12.5px;color:#000;transform:scaleX(0.8311);transform-origin:0 0;">Dry Run</span>
<div style="left:1725px;top:643px;width:31px;height:21px;box-sizing:border-box;border:1px solid #707070;border-radius:3px;background:linear-gradient(to bottom,#f2f2f2 0,#ebebeb 48%,#dddddd 52%,#cfcfcf 100%);box-shadow:inset 0 0 0 1px rgba(255,255,255,.85);"></div>
<span class="t" style="left:1731.70px;top:647.75px;font-size:12.5px;line-height:12.5px;color:#000;transform:scaleX(0.8472);transform-origin:0 0;">OK</span>
<div style="left:0px;top:953px;width:1920px;height:6px;background:#f0f0f0;"></div>
<div style="left:0px;top:953px;width:1920px;height:1px;background:#6a6a6a;"></div>
<div style="left:0px;top:954px;width:1920px;height:4px;background:repeating-conic-gradient(#6e6e6e 0 25%,#f4f4f4 0 50%) 0 0/2px 2px;"></div>
<div style="left:0px;top:958px;width:1920px;height:1px;background:#6a6a6a;"></div>
<div style="left:0px;top:959px;width:1920px;height:68px;background:#f0f0f0;"></div>
<div style="left:0px;top:959px;width:1px;height:68px;background:#6a6a6a;"></div>
<div style="left:1919px;top:959px;width:1px;height:68px;background:#6a6a6a;"></div>
<span class="t" style="left:7.30px;top:964.75px;font-size:12.5px;line-height:12.5px;color:#000;transform:scaleX(0.8496);transform-origin:0 0;">Show in Log:</span>
<div style="left:84.2px;top:965px;width:12px;height:12px;box-sizing:border-box;border:1px solid #2a0000;border-radius:3px;background:radial-gradient(circle at 50% 50%,#ff1414 0,#e80000 45%,#a80000 100%);"></div>
<span class="t" style="left:97.50px;top:964.75px;font-size:12.5px;line-height:12.5px;color:#000;transform:scaleX(0.8121);transform-origin:0 0;">Commands</span>
<div style="left:174.2px;top:965px;width:12px;height:12px;box-sizing:border-box;border:1px solid #002a00;border-radius:3px;background:radial-gradient(circle at 50% 50%,#1cf41c 0,#00d000 45%,#008a00 100%);"></div>
<span class="t" style="left:188.10px;top:964.75px;font-size:12.5px;line-height:12.5px;color:#000;transform:scaleX(0.8229);transform-origin:0 0;">Infos</span>
<div style="left:235px;top:965px;width:12px;height:12px;box-sizing:border-box;border:1px solid #002a00;border-radius:3px;background:radial-gradient(circle at 50% 50%,#1cf41c 0,#00d000 45%,#008a00 100%);"></div>
<span class="t" style="left:249.40px;top:964.75px;font-size:12.5px;line-height:12.5px;color:#000;transform:scaleX(0.8389);transform-origin:0 0;">Warnings</span>
<div style="left:318.1px;top:965px;width:12px;height:12px;box-sizing:border-box;border:1px solid #002a00;border-radius:3px;background:radial-gradient(circle at 50% 50%,#1cf41c 0,#00d000 45%,#008a00 100%);"></div>
<span class="t" style="left:332.30px;top:964.75px;font-size:12.5px;line-height:12.5px;color:#000;transform:scaleX(0.7640);transform-origin:0 0;">Errors</span>
<div style="left:383.1px;top:965px;width:12px;height:12px;box-sizing:border-box;border:1px solid #2a0000;border-radius:3px;background:radial-gradient(circle at 50% 50%,#ff1414 0,#e80000 45%,#a80000 100%);"></div>
<span class="t" style="left:397.00px;top:964.75px;font-size:12.5px;line-height:12.5px;color:#000;transform:scaleX(0.8170);transform-origin:0 0;">ACK</span>
<div style="left:442px;top:965px;width:12px;height:12px;box-sizing:border-box;border:1px solid #002a00;border-radius:3px;background:radial-gradient(circle at 50% 50%,#1cf41c 0,#00d000 45%,#008a00 100%);"></div>
<span class="t" style="left:456.50px;top:964.75px;font-size:12.5px;line-height:12.5px;color:#000;transform:scaleX(0.8272);transform-origin:0 0;">Auto Scroll</span>
<span class="t" style="left:548.50px;top:964.75px;font-size:12.5px;line-height:12.5px;color:#000;transform:scaleX(0.8266);transform-origin:0 0;">Clear Log</span>
<span class="t" style="left:632.50px;top:964.75px;font-size:12.5px;line-height:12.5px;color:#000;transform:scaleX(0.8224);transform-origin:0 0;">Copy</span>
<svg class="a" style="left:533px;top:965px" width="12" height="13" viewBox="0 0 12 13"><path d="M1 2.800h10 M4.200 2.500 V1 h3.600 V2.500" fill="none" stroke="#777" stroke-width="1.300"/><path d="M2 4.200h8l-.6 8.300h-6.800z" fill="#8c8c8c"/><path d="M4.300 5.500v5.800 M6 5.500v5.800 M7.700 5.500v5.800" stroke="#e8e8e8" stroke-width=".7"/></svg>
<svg class="a" style="left:616px;top:965px" width="14" height="13" viewBox="0 0 14 13"><path d="M1.200 3.500 h5.300 v6.500 h-5.300z" fill="#f4f4f4" stroke="#666" stroke-width="1.200"/><path d="M5.700 1.200 h4.500 l2.600 2.600 v7.700 h-7.100z" fill="#f4f4f4" stroke="#666" stroke-width="1.200"/><path d="M3 3.300 v-1 h2" fill="none" stroke="#666" stroke-width="1"/></svg>
<div style="left:1px;top:984px;width:102px;height:43px;background:#5f9ea0;"></div>
<div style="left:103px;top:984px;width:1799px;height:16px;background:#faf0e6;"></div>
<div style="left:103px;top:1000px;width:1799px;height:16px;background:#fff;"></div>
<span class="t" style="left:6.70px;top:987.50px;font-size:11px;line-height:11px;color:#f5f5f5;font-family:'Liberation Mono',monospace;letter-spacing:0.749px;">19:59:48.038</span>
<span class="t" style="left:6.70px;top:1003.50px;font-size:11px;line-height:11px;color:#f5f5f5;font-family:'Liberation Mono',monospace;letter-spacing:0.749px;">19:59:48.054</span>
<span class="t" style="left:109.40px;top:987.50px;font-size:11px;line-height:11px;color:#1a1a9a;font-family:'Liberation Mono',monospace;letter-spacing:0.794px;">Gcode/PLA/humidity_base.gcode 951168</span>
<span class="t" style="left:109.40px;top:1003.50px;font-size:11px;line-height:11px;color:#1a1a9a;font-family:'Liberation Mono',monospace;letter-spacing:0.776px;">End file list</span>
<svg class="a" style="left:1907px;top:991px" width="8" height="30" viewBox="0 0 8 30"><path d="M0 4L4 0L8 4z M0 26L4 30L8 26z" fill="#333"/></svg>
<div style="left:0px;top:1027px;width:1920px;height:2px;background:#696969;"></div>
<div style="left:0px;top:1029px;width:1920px;height:1px;background:#fbfbfb;"></div>
<div style="left:0px;top:1030px;width:1920px;height:18px;background:#f0eceb;"></div>
<div style="left:0px;top:1048px;width:1920px;height:2px;background:#f6f6f6;"></div>
<span class="t" style="left:4.60px;top:1034.00px;font-size:12px;line-height:12px;color:#000;transform:scaleX(0.9800);transform-origin:0 0;">Connected: Orion Delta</span>
<span class="t" style="left:799.40px;top:1034.00px;font-size:12px;line-height:12px;color:#000;transform:scaleX(0.9574);transform-origin:0 0;">Extruder: 25.5°C/Off Bed: 89.9/90°C</span>
<span class="t" style="left:1665.50px;top:1034.00px;font-size:12px;line-height:12px;color:#000;transform:scaleX(1.0078);transform-origin:0 0;">Idle</span>
<div style="left:1690px;top:1031px;width:214px;height:16px;box-sizing:border-box;border:1px solid #b2b2b2;border-radius:3px;background:linear-gradient(to bottom,#f2f2f2 0,#dcdcdc 45%,#cacaca 50%,#d3d3d3 100%);"></div>
<svg class="a" style="left:14px;top:1045px" width="26" height="5" viewBox="0 0 26 5"><path d="M.5 5 Q13 -2.500 25.500 5" fill="#d6e2f0" stroke="#5a6c8c" stroke-width="1"/></svg>
<svg class="a" style="left:0;top:0" width="1920" height="20" viewBox="0 0 1920 20"><defs><linearGradient id="tb" gradientUnits="userSpaceOnUse" x1="-20" y1="0" x2="1960" y2="0" gradientTransform="translate(-11 0) skewX(49)"><stop offset="0.0101" stop-color="#505050"/><stop offset="0.0823" stop-color="#484848"/><stop offset="0.1111" stop-color="#444444"/><stop offset="0.1389" stop-color="#424242"/><stop offset="0.1490" stop-color="#1e1e1e"/><stop offset="0.2323" stop-color="#1c1c1c"/><stop offset="0.2374" stop-color="#383838"/><stop offset="0.2525" stop-color="#363636"/><stop offset="0.2576" stop-color="#2a2a2a"/><stop offset="0.3131" stop-color="#282828"/><stop offset="0.3258" stop-color="#3a3a3a"/><stop offset="0.3434" stop-color="#383838"/><stop offset="0.3510" stop-color="#202020"/><stop offset="0.4192" stop-color="#1e1e1e"/><stop offset="0.4646" stop-color="#303030"/><stop offset="0.5152" stop-color="#3c3c3c"/><stop offset="0.5455" stop-color="#343434"/><stop offset="0.5697" stop-color="#303030"/><stop offset="0.5717" stop-color="#1e1e1e"/><stop offset="0.5778" stop-color="#1e1e1e"/><stop offset="0.5798" stop-color="#363636"/><stop offset="0.6227" stop-color="#323232"/><stop offset="0.6247" stop-color="#1e1e1e"/><stop offset="0.6308" stop-color="#1e1e1e"/><stop offset="0.6328" stop-color="#303030"/><stop offset="0.6869" stop-color="#282828"/><stop offset="0.7071" stop-color="#1e1e1e"/><stop offset="0.7879" stop-color="#1c1c1c"/><stop offset="0.7919" stop-color="#2c2c2c"/><stop offset="0.8232" stop-color="#2a2a2a"/><stop offset="0.8273" stop-color="#1a1a1a"/><stop offset="0.9040" stop-color="#1c1c1c"/><stop offset="0.9253" stop-color="#585858"/><stop offset="0.9899" stop-color="#626262"/></linearGradient><linearGradient id="tbv" x1="0" y1="0" x2="0" y2="1"><stop offset="0" stop-color="#fff" stop-opacity=".07"/><stop offset=".5" stop-color="#000" stop-opacity="0"/><stop offset="1" stop-color="#000" stop-opacity=".22"/></linearGradient></defs><rect width="1920" height="20" fill="url(#tb)"/><rect width="1920" height="20" fill="url(#tbv)"/></svg>
<div style="left:-30px;top:-14px;width:190px;height:46px;background:radial-gradient(ellipse 50% 50% at 50% 50%,rgba(255,255,255,.98) 0,rgba(255,255,255,.95) 55%,rgba(255,255,255,.55) 75%,rgba(255,255,255,.15) 92%,rgba(255,255,255,0) 100%);"></div>
<div style="left:0px;top:19px;width:1920px;height:1px;background:#6e6e6e;"></div>
<div style="left:0px;top:20px;width:1920px;height:1px;background:#c9c9c9;"></div>
<div style="left:0px;top:21px;width:1920px;height:1px;background:#333;"></div>
<svg class="a" style="left:0;top:3px" width="18" height="16" viewBox="0 0 18 16"><path d="M1 3 L12 2 L12 15 L1 14Z" fill="#c8402a"/><path d="M12 2 L16 1 L16 12 L12 15Z" fill="#5c9a3c"/><path d="M1 3 L5 0.5 L16 1 L12 2Z" fill="#d9c08a"/><path d="M2 4 L11 3.3 L11 13.8 L2 13Z" fill="none" stroke="#f3dfa2" stroke-width=".8"/><text x="3.2" y="12.3" font-family="Liberation Sans" font-weight="bold" font-size="10" fill="#fff3c8">R</text><path d="M13.2 4 L15 3.4 L15 10 L13.2 11.6Z" fill="none" stroke="#e9d68f" stroke-width=".6"/></svg>
<span class="t" style="left:21.50px;top:5.00px;font-size:12px;line-height:12px;color:#000;transform:scaleX(0.9772);transform-origin:0 0;">Repetier-Host V1.0.6</span>
<div style="left:1813px;top:-2px;width:105px;height:21px;box-sizing:border-box;border:1px solid #cfcfcf;border-radius:0 0 5px 5px;background:#222;overflow:hidden;"><div style="left:1px;top:1px;width:28px;height:8px;background:linear-gradient(#c8c8c8,#a9a9a9)"></div><div style="left:1px;top:9px;width:28px;height:10px;background:linear-gradient(#66666e,#82828c)"></div><div style="left:30px;top:1px;width:26px;height:8px;background:linear-gradient(#c8c8c8,#a9a9a9)"></div><div style="left:30px;top:9px;width:26px;height:10px;background:linear-gradient(#66666e,#82828c)"></div><div style="left:57px;top:1px;width:46px;height:8px;background:linear-gradient(#f0b4a8,#dc8c7e)"></div><div style="left:57px;top:9px;width:46px;height:10px;background:linear-gradient(#b42c1c,#c8402c 60%,#d86448)"></div></div>
<svg class="a" style="left:1813px;top:0" width="105" height="19" viewBox="0 0 105 19"><rect x="10.800" y="8.400" width="10.600" height="4" rx=".8" fill="#fff" stroke="#3c4468" stroke-width=".7"/><path d="M40 3.600 h7.800 v7 h-2 M37.400 6 h7.800 v7 h-7.800z" fill="none" stroke="#3c4468" stroke-width="2.800" stroke-linejoin="round"/><path d="M40 3.600 h7.800 v7 h-2 M37.400 6 h7.800 v7 h-7.800z" fill="none" stroke="#fff" stroke-width="1.700"/><path d="M76.800 5 L83.600 11.300 M83.600 5 L76.800 11.300" stroke="#3c4468" stroke-width="3.900" stroke-linecap="square"/><path d="M76.800 5 L83.600 11.300 M83.600 5 L76.800 11.300" stroke="#fff" stroke-width="2.600" stroke-linecap="square"/></svg>
<span class="t" style="left:15.30px;top:28.00px;font-size:12px;line-height:12px;color:#000;transform:scaleX(0.9153);transform-origin:0 0;">File</span>
<span class="t" style="left:52.00px;top:28.00px;font-size:12px;line-height:12px;color:#000;transform:scaleX(0.9692);transform-origin:0 0;">View</span>
<span class="t" style="left:96.30px;top:28.00px;font-size:12px;line-height:12px;color:#000;letter-spacing:0.119px;">Config</span>
<span class="t" style="left:151.30px;top:28.00px;font-size:12px;line-height:12px;color:#000;transform:scaleX(0.9761);transform-origin:0 0;">Printer</span>
<span class="t" style="left:205.30px;top:28.00px;font-size:12px;line-height:12px;color:#000;letter-spacing:0.177px;">Tools</span>
<span class="t" style="left:253.30px;top:28.00px;font-size:12px;line-height:12px;color:#000;transform:scaleX(0.9805);transform-origin:0 0;">Help</span>
<span class="t" style="left:5.50px;top:83.00px;font-size:12px;line-height:12px;color:#000;transform:scaleX(0.9888);transform-origin:0 0;">Disconnect</span>
<span class="t" style="left:87.50px;top:83.00px;font-size:12px;line-height:12px;color:#000;transform:scaleX(0.9552);transform-origin:0 0;">Load</span>
<span class="t" style="left:136.40px;top:83.00px;font-size:12px;line-height:12px;color:#000;transform:scaleX(0.9321);transform-origin:0 0;">Save Print</span>
<span class="t" style="left:199.50px;top:83.00px;font-size:12px;line-height:12px;color:#000;transform:scaleX(0.9616);transform-origin:0 0;">Start Print</span>
<span class="t" style="left:274.70px;top:83.00px;font-size:12px;line-height:12px;color:#8d8d8d;transform:scaleX(0.9838);transform-origin:0 0;">Kill Print</span>
<span class="t" style="left:329.70px;top:83.00px;font-size:12px;line-height:12px;color:#000;transform:scaleX(1.0048);transform-origin:0 0;">Toggle Log</span>
<span class="t" style="left:400.30px;top:83.00px;font-size:12px;line-height:12px;color:#000;transform:scaleX(0.9790);transform-origin:0 0;">Show Filament</span>
<span class="t" style="left:489.20px;top:83.00px;font-size:12px;line-height:12px;color:#000;transform:scaleX(0.9586);transform-origin:0 0;">Show Travel</span>
<span class="t" style="left:1668.40px;top:83.00px;font-size:12px;line-height:12px;color:#000;transform:scaleX(0.9703);transform-origin:0 0;">Printer Settings</span>
<span class="t" style="left:1759.50px;top:83.00px;font-size:12px;line-height:12px;color:#000;transform:scaleX(0.9362);transform-origin:0 0;">Easy Mode</span>
<span class="t" style="left:1827.60px;top:83.00px;font-size:12px;line-height:12px;color:#000;transform:scaleX(0.9570);transform-origin:0 0;">Emergency Stop</span>
<svg class="a" style="left:73.6px;top:70.500px" width="6" height="3.500" viewBox="0 0 6 3.500"><path d="M0 0h6L3 3.500z" fill="#000"/></svg>
<svg class="a" style="left:122.4px;top:70.500px" width="6" height="3.500" viewBox="0 0 6 3.500"><path d="M0 0h6L3 3.500z" fill="#000"/></svg>
<svg class="a" style="left:260.2px;top:70.500px" width="6" height="3.500" viewBox="0 0 6 3.500"><path d="M0 0h6L3 3.500z" fill="#000"/></svg>
<svg class="a" style="left:19px;top:49px" width="32" height="32" viewBox="0 0 32 32"><defs><radialGradient id="gd" cx="45%" cy="40%" r="62%"><stop offset="0" stop-color="#4cdc38"/><stop offset=".75" stop-color="#3acf2a"/><stop offset=".93" stop-color="#2fb826"/><stop offset="1" stop-color="#23881f"/></radialGradient></defs><circle cx="16" cy="15.700" r="15.100" fill="url(#gd)"/><path d="M12.250 6.250 h2 v5.650 h4 v-5.650 h2 v5.650 h2 v5 q0 2.300-2.500 3 l-1.500 .4 v5.600 h-4 v-5.600 l-1.500-.4 q-2.500-.7-2.500-3 v-5 h2z" fill="#fff"/></svg>
<svg class="a" style="left:90px;top:52px" width="21" height="26" viewBox="0 0 21 26"><path d="M2.250 2.400 H11.800 L18.400 9 V23.500 H2.250z" fill="#f2f2f2" stroke="#666" stroke-width="2" stroke-linejoin="miter"/><path d="M11 2.400 V10 H18.400" fill="none" stroke="#666" stroke-width="1.900"/><path d="M5 14.800H15.600 M5 19H15.600" stroke="#666" stroke-width="1.900"/></svg>
<svg class="a" style="left:149px;top:53px" width="26" height="25" viewBox="0 0 26 25"><path d="M3.300 .9 H21.600 L24.600 3.900 V21.800 q0 1.600-1.600 1.600 H3.300 q-1.600 0-1.600-1.600 V2.500 q0-1.600 1.600-1.600z" fill="#686868" stroke="#4a4a4a" stroke-width=".9"/><rect x="3.400" y="2.700" width="17.500" height="8.600" fill="#f3f3f3"/><rect x="14.400" y="4.100" width="2.800" height="5.600" fill="#555"/></svg>
<svg class="a" style="left:212px;top:51px" width="28" height="28" viewBox="0 0 28 28"><path d="M1.900 .8 L25.600 13.950 L1.900 27.100z" fill="#747474" stroke="#666" stroke-width=".5"/></svg>
<div style="left:284px;top:53px;width:24px;height:24px;background:#b3b3b3;"></div>
<svg class="a" style="left:346px;top:51px" width="27" height="26" viewBox="0 0 27 26"><g transform="rotate(-45 13.500 13)"><path d="M-3.600 13 L3.200 10.300 L20.300 10.300 L20.300 15.700 L3.200 15.700z" fill="#666"/><path d="M4.500 12.800 h14.500" stroke="#eee" stroke-width="1"/><path d="M21.700 10.300 h2.600 q2.700 0 2.700 2.700 t-2.700 2.700 h-2.600z" fill="#666"/></g></svg>
<svg class="a" style="left:422px;top:53px" width="34" height="24" viewBox="0 0 34 24"><path d="M3 11.700 C7.500 5.500 12 2.900 17 2.900 S26.500 5.500 31 11.700 C26.500 17.900 22 20.500 17 20.500 S7.500 17.900 3 11.700z" fill="none" stroke="#666" stroke-width="2.200" stroke-linejoin="round"/><circle cx="17.200" cy="10" r="7.500" fill="#747474"/><path d="M12.600 10.400 a5 5 0 0 1 4.300-4.900" stroke="#f0f0f0" stroke-width="1.200" fill="none" stroke-linecap="round"/></svg>
<svg class="a" style="left:504px;top:53px" width="34" height="24" viewBox="0 0 34 24"><path d="M3 11.700 C7.500 5.500 12 2.900 17 2.900 S26.500 5.500 31 11.700 C26.500 17.900 22 20.500 17 20.500 S7.500 17.900 3 11.700z" fill="none" stroke="#666" stroke-width="2.200" stroke-linejoin="round"/><circle cx="17.200" cy="10" r="7.500" fill="#747474"/><path d="M12.600 10.400 a5 5 0 0 1 4.300-4.900" stroke="#f0f0f0" stroke-width="1.200" fill="none" stroke-linecap="round"/></svg>
<svg class="a" style="left:1690px;top:48px" width="40" height="34" viewBox="1690 48 40 34"><path d="M1709.84 64.15 L1712.01 65.12 L1710.64 68.45 L1708.42 67.61 L1707.04 68.99 L1707.89 71.21 L1704.57 72.60 L1703.59 70.43 L1701.65 70.44 L1700.68 72.61 L1697.35 71.24 L1698.19 69.02 L1696.81 67.64 L1694.59 68.49 L1693.20 65.17 L1695.37 64.19 L1695.36 62.25 L1693.19 61.28 L1694.56 57.95 L1696.78 58.79 L1698.16 57.41 L1697.31 55.19 L1700.63 53.80 L1701.61 55.97 L1703.55 55.96 L1704.52 53.79 L1707.85 55.16 L1707.01 57.38 L1708.39 58.76 L1710.61 57.91 L1712.00 61.23 L1709.83 62.21Z M1705.90 63.20 A3.3 3.3 0 1 0 1699.30 63.20 A3.3 3.3 0 1 0 1705.90 63.20Z" fill="#6b6b6b" fill-rule="evenodd"/><path d="M1721.56 57.15 L1723.10 57.15 L1723.10 59.25 L1721.56 59.25 L1721.15 60.26 L1722.23 61.35 L1720.75 62.83 L1719.66 61.75 L1718.65 62.16 L1718.65 63.70 L1716.55 63.70 L1716.55 62.16 L1715.54 61.75 L1714.45 62.83 L1712.97 61.35 L1714.05 60.26 L1713.64 59.25 L1712.10 59.25 L1712.10 57.15 L1713.64 57.15 L1714.05 56.14 L1712.97 55.05 L1714.45 53.57 L1715.54 54.65 L1716.55 54.24 L1716.55 52.70 L1718.65 52.70 L1718.65 54.24 L1719.66 54.65 L1720.75 53.57 L1722.23 55.05 L1721.15 56.14Z M1719.30 58.20 A1.7 1.7 0 1 0 1715.90 58.20 A1.7 1.7 0 1 0 1719.30 58.20Z" fill="#6b6b6b" fill-rule="evenodd"/><path d="M1721.39 71.03 L1723.00 71.37 L1722.55 73.61 L1720.93 73.29 L1720.26 74.29 L1721.16 75.66 L1719.26 76.93 L1718.34 75.56 L1717.17 75.79 L1716.83 77.40 L1714.59 76.95 L1714.91 75.33 L1713.91 74.66 L1712.54 75.56 L1711.27 73.66 L1712.64 72.74 L1712.41 71.57 L1710.80 71.23 L1711.25 68.99 L1712.87 69.31 L1713.54 68.31 L1712.64 66.94 L1714.54 65.67 L1715.46 67.04 L1716.63 66.81 L1716.97 65.20 L1719.21 65.65 L1718.89 67.27 L1719.89 67.94 L1721.26 67.04 L1722.53 68.94 L1721.16 69.86Z M1718.90 71.30 A2 2 0 1 0 1714.90 71.30 A2 2 0 1 0 1718.90 71.30Z" fill="#6b6b6b" fill-rule="evenodd"/></svg>
<svg class="a" style="left:1772px;top:49px" width="32" height="32" viewBox="0 0 32 32"><defs><radialGradient id="ge" cx="50%" cy="40%" r="60%"><stop offset="0" stop-color="#cc4a4a"/><stop offset=".7" stop-color="#b83838"/><stop offset="1" stop-color="#9a2a2a"/></radialGradient></defs><circle cx="16" cy="16" r="15" fill="url(#ge)" stroke="#8a2c2c" stroke-width=".8"/><text x="16" y="20" text-anchor="middle" font-family="Liberation Sans" font-weight="bold" font-size="9.300" fill="#fff" textLength="26" lengthAdjust="spacingAndGlyphs">EASY</text></svg>
<svg class="a" style="left:1854px;top:49px" width="32" height="32" viewBox="0 0 32 32"><defs><pattern id="hz" width="11.300" height="11.300" patternUnits="userSpaceOnUse" patternTransform="rotate(-45) translate(0 1.500)"><rect width="11.300" height="5.650" fill="#111"/><rect y="5.650" width="11.300" height="5.650" fill="#f8f400"/></pattern><radialGradient id="gem" cx="50%" cy="50%" r="50%"><stop offset="0" stop-color="#ff1010"/><stop offset=".82" stop-color="#fb1212"/><stop offset=".9" stop-color="#ff5a50"/><stop offset="1" stop-color="#d81010"/></radialGradient></defs><rect width="32" height="32" fill="url(#hz)"/><circle cx="16" cy="16.200" r="15" fill="url(#gem)"/><g fill="none" stroke="#fff" stroke-width="1.500"><path d="M8.300 22.800 A10.200 10.200 0 0 1 9.300 8.600"/><path d="M14 6.100 A10.200 10.200 0 0 1 26.100 14.500"/><path d="M24.800 21.600 A10.200 10.200 0 0 1 13.500 26"/></g><path d="M7.800 6.800 l4.600 .2 l-2.600 3.800z M28.300 13.800 l-1.600 4.400 l-3.200-3.500z M11.800 28.300 l.6-4.600 l3.400 3z" fill="#fff"/></svg>
</body></html>
